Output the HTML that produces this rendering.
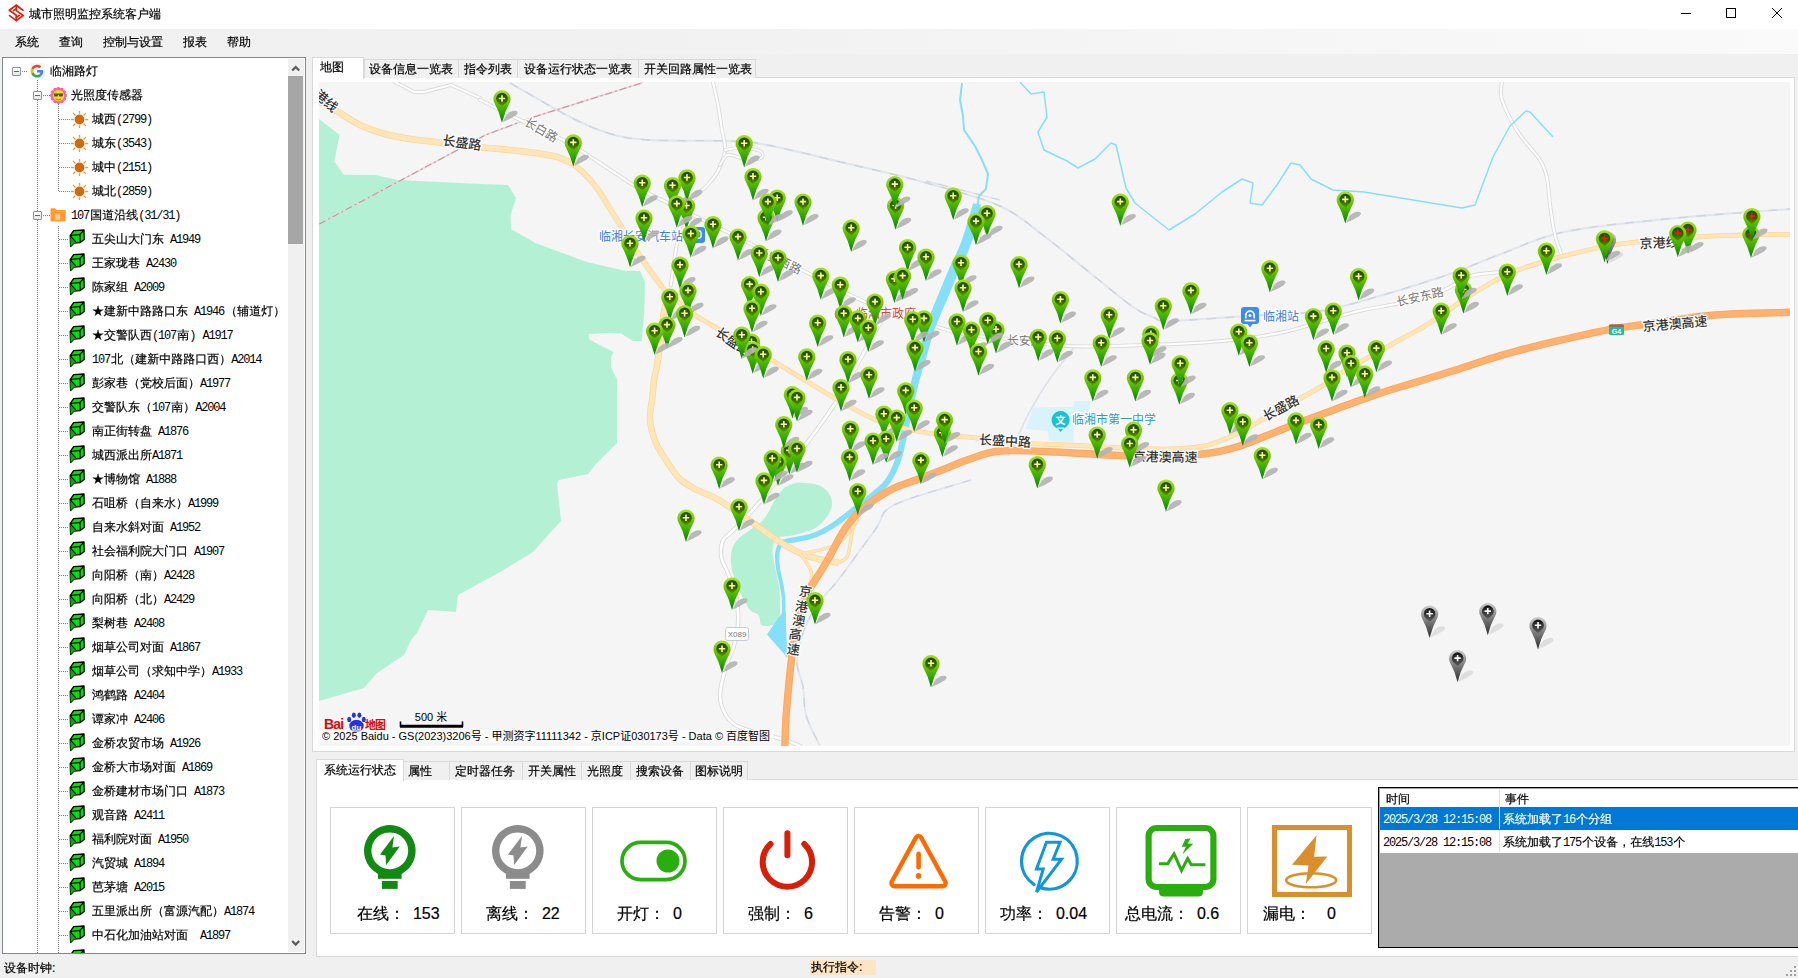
<!DOCTYPE html>
<html lang="zh-CN">
<head>
<meta charset="utf-8">
<title>城市照明监控系统客户端</title>
<style>
html,body{margin:0;padding:0;}
body{width:1798px;height:978px;overflow:hidden;background:#f0f0f0;position:relative;
 font-family:"Liberation Sans","WenQuanYi Zen Hei","Noto Sans CJK SC",sans-serif;font-size:12px;color:#000;line-height:1;-webkit-text-stroke-width:0.2px;}
.abs{position:absolute;}
.t12{position:absolute;font-size:12px;line-height:12px;white-space:pre;word-spacing:2.7px;}
.ctx{word-spacing:3.5px;}
.l{font-size:11px;letter-spacing:-0.1px;}
.m{font-family:"Liberation Mono",monospace;letter-spacing:-1.2px;margin-right:1.2px;word-spacing:0;-webkit-text-stroke-width:0;}
#titlebar{position:absolute;left:0;top:0;width:1798px;height:29px;background:#fff;}
#menubar{position:absolute;left:0;top:29px;width:1798px;height:25px;background:linear-gradient(to right,#f0f0f0 0%,#f1f1f1 35%,#fafafa 100%);}
#menubar span{position:absolute;top:7px;font-size:12px;line-height:12px;}
#tree{position:absolute;left:2px;top:57px;width:302px;height:895px;background:#fff;border:1px solid #828790;overflow:hidden;}
.row{position:absolute;left:0;height:24px;white-space:nowrap;font-size:12px;line-height:12px;}
.row .tx{position:absolute;top:6px;}
.vdot{position:absolute;width:1px;background-image:linear-gradient(to bottom,#808080 50%,transparent 50%);background-size:1px 2px;}
.hdot{position:absolute;height:1px;background-image:linear-gradient(to right,#808080 50%,transparent 50%);background-size:2px 1px;}
.box{position:absolute;width:7px;height:7px;border:1px solid #919191;background:linear-gradient(#fff,#e6e6e6);border-radius:1px;}
.box:after{content:"";position:absolute;left:1px;top:3px;width:5px;height:1px;background:#4b63a7;}
.tab{position:absolute;font-size:12px;line-height:12px;white-space:nowrap;background:#f0f0f0;border:1px solid #d9d9d9;border-bottom:none;box-sizing:border-box;}
.tab.sel{background:#fff;border-color:#d9d9d9;}
.tab span{position:absolute;left:5px;top:4px;}
.card{position:absolute;top:807px;width:123px;height:125px;border:1px solid #d4d4d4;background:#fff;}
.ctx{position:absolute;top:906px;font-size:16px;line-height:16px;white-space:pre;}
</style>
</head>
<body>
<div id="titlebar">
<svg class="abs" style="left:7px;top:3px" width="19" height="20" viewBox="0 0 19 20"><g fill="none" stroke="#e0200c" stroke-width="1.7" stroke-linejoin="round" stroke-linecap="round"><path d="M9.3 2.2 L2.3 7.3 L9.3 12.2 L9.3 17.6 L2.6 12.6"/><path d="M9.3 17.6 L16.2 12.5 L9.3 7.6 L9.3 2.2 L16 7.2"/><path d="M6.4 7.6 L9.3 5.6"/><path d="M12.2 12.4 L9.3 14.4"/></g></svg>
<div class="t12" style="left:29px;top:8px;">城市照明监控系统客户端</div>
<svg class="abs" style="left:1660px;top:0" width="138" height="29" viewBox="0 0 138 29"><g fill="none" stroke="#000" stroke-width="1"><path d="M21 13.5 H31"/><rect x="66.5" y="8.5" width="9" height="9"/><path d="M112 8 L122 18 M122 8 L112 18"/></g></svg>
</div>
<div id="menubar">
<span style="left:15px">系统</span>
<span style="left:59px">查询</span>
<span style="left:103px">控制与设置</span>
<span style="left:183px">报表</span>
<span style="left:227px">帮助</span>
</div>
<div id="tree">
<div class="vdot" style="left:34px;top:22px;height:880px"></div>
<div class="vdot" style="left:55px;top:46px;height:88px"></div>
<div class="vdot" style="left:55px;top:168px;height:734px"></div>
<div class="box" style="left:9px;top:9px"></div>
<div class="hdot" style="left:19px;top:13px;width:6px"></div>
<svg class="abs" style="left:26px;top:5px" width="16" height="16" viewBox="0 0 48 48"><rect x="0" y="0" width="48" height="48" rx="8" fill="#f6f6f6"/><path fill="#EA4335" d="M24 9.5c3.54 0 6.71 1.22 9.21 3.6l6.85-6.85C35.9 2.38 30.47 0 24 0 14.62 0 6.51 5.38 2.56 13.22l7.98 6.19C12.43 13.72 17.74 9.5 24 9.5z" transform="translate(5 5) scale(0.8)"/><path fill="#4285F4" d="M46.98 24.55c0-1.57-.15-3.09-.38-4.55H24v9.02h12.94c-.58 2.96-2.26 5.48-4.78 7.18l7.73 6c4.51-4.18 7.09-10.36 7.09-17.65z" transform="translate(5 5) scale(0.8)"/><path fill="#FBBC05" d="M10.53 28.59c-.48-1.45-.76-2.99-.76-4.59s.27-3.14.76-4.59l-7.98-6.19C.92 16.46 0 20.12 0 24c0 3.88.92 7.54 2.56 10.78l7.97-6.19z" transform="translate(5 5) scale(0.8)"/><path fill="#34A853" d="M24 48c6.48 0 11.93-2.13 15.89-5.81l-7.73-6c-2.15 1.45-4.92 2.3-8.16 2.3-6.26 0-11.57-4.22-13.47-9.91l-7.98 6.19C6.51 42.62 14.62 48 24 48z" transform="translate(5 5) scale(0.8)"/></svg>
<div class="t12" style="left:47px;top:7px">临湘路灯</div>
<div class="box" style="left:30px;top:33px"></div>
<div class="hdot" style="left:40px;top:37px;width:7px"></div>
<svg class="abs" style="left:47px;top:29px" width="17" height="17" viewBox="0 0 34 34"><g fill="#f9619b"><circle cx="30.0" cy="17.0" r="4"/><circle cx="28.3" cy="23.5" r="4"/><circle cx="23.5" cy="28.3" r="4"/><circle cx="17.0" cy="30.0" r="4"/><circle cx="10.5" cy="28.3" r="4"/><circle cx="5.7" cy="23.5" r="4"/><circle cx="4.0" cy="17.0" r="4"/><circle cx="5.7" cy="10.5" r="4"/><circle cx="10.5" cy="5.7" r="4"/><circle cx="17.0" cy="4.0" r="4"/><circle cx="23.5" cy="5.7" r="4"/><circle cx="28.3" cy="10.5" r="4"/></g><circle cx="17" cy="17" r="11.5" fill="#fbd433"/><path d="M7 13 H27 L25 19 H19 L17 15 L15 19 H9 Z" fill="#4a5a20"/><path d="M12 24 Q17 27 22 24" stroke="#a86a10" stroke-width="1.6" fill="none"/></svg>
<div class="t12" style="left:68px;top:31px">光照度传感器</div>
<div class="hdot" style="left:56px;top:61px;width:11px"></div>
<svg class="abs" style="left:68px;top:53px" width="17" height="17" viewBox="0 0 17 17"><g stroke="#f09a3c" stroke-width="1.3" stroke-linecap="round"><path d="M14.80 8.50 L17.10 8.50"/><path d="M12.95 12.95 L14.58 14.58"/><path d="M8.50 14.80 L8.50 17.10"/><path d="M4.05 12.95 L2.42 14.58"/><path d="M2.20 8.50 L-0.10 8.50"/><path d="M4.05 4.05 L2.42 2.42"/><path d="M8.50 2.20 L8.50 -0.10"/><path d="M12.95 4.05 L14.58 2.42"/></g><circle cx="8.5" cy="8.5" r="4.9" fill="#d2690a"/></svg>
<div class="t12" style="left:89px;top:55px">城西<span class="m">(2799)</span></div>
<div class="hdot" style="left:56px;top:85px;width:11px"></div>
<svg class="abs" style="left:68px;top:77px" width="17" height="17" viewBox="0 0 17 17"><g stroke="#f09a3c" stroke-width="1.3" stroke-linecap="round"><path d="M14.80 8.50 L17.10 8.50"/><path d="M12.95 12.95 L14.58 14.58"/><path d="M8.50 14.80 L8.50 17.10"/><path d="M4.05 12.95 L2.42 14.58"/><path d="M2.20 8.50 L-0.10 8.50"/><path d="M4.05 4.05 L2.42 2.42"/><path d="M8.50 2.20 L8.50 -0.10"/><path d="M12.95 4.05 L14.58 2.42"/></g><circle cx="8.5" cy="8.5" r="4.9" fill="#d2690a"/></svg>
<div class="t12" style="left:89px;top:79px">城东<span class="m">(3543)</span></div>
<div class="hdot" style="left:56px;top:109px;width:11px"></div>
<svg class="abs" style="left:68px;top:101px" width="17" height="17" viewBox="0 0 17 17"><g stroke="#f09a3c" stroke-width="1.3" stroke-linecap="round"><path d="M14.80 8.50 L17.10 8.50"/><path d="M12.95 12.95 L14.58 14.58"/><path d="M8.50 14.80 L8.50 17.10"/><path d="M4.05 12.95 L2.42 14.58"/><path d="M2.20 8.50 L-0.10 8.50"/><path d="M4.05 4.05 L2.42 2.42"/><path d="M8.50 2.20 L8.50 -0.10"/><path d="M12.95 4.05 L14.58 2.42"/></g><circle cx="8.5" cy="8.5" r="4.9" fill="#d2690a"/></svg>
<div class="t12" style="left:89px;top:103px">城中<span class="m">(2151)</span></div>
<div class="hdot" style="left:56px;top:133px;width:11px"></div>
<svg class="abs" style="left:68px;top:125px" width="17" height="17" viewBox="0 0 17 17"><g stroke="#f09a3c" stroke-width="1.3" stroke-linecap="round"><path d="M14.80 8.50 L17.10 8.50"/><path d="M12.95 12.95 L14.58 14.58"/><path d="M8.50 14.80 L8.50 17.10"/><path d="M4.05 12.95 L2.42 14.58"/><path d="M2.20 8.50 L-0.10 8.50"/><path d="M4.05 4.05 L2.42 2.42"/><path d="M8.50 2.20 L8.50 -0.10"/><path d="M12.95 4.05 L14.58 2.42"/></g><circle cx="8.5" cy="8.5" r="4.9" fill="#d2690a"/></svg>
<div class="t12" style="left:89px;top:127px">城北<span class="m">(2859)</span></div>
<div class="box" style="left:30px;top:153px"></div>
<div class="hdot" style="left:40px;top:157px;width:7px"></div>
<svg class="abs" style="left:47px;top:150px" width="16" height="14" viewBox="0 0 16 14"><path d="M0.5 1.2 Q0.5 0.3 1.4 0.3 H5 L6.6 2 H14.8 Q15.6 2 15.6 2.9 V12.6 Q15.6 13.4 14.8 13.4 H1.3 Q0.5 13.4 0.5 12.6 Z" fill="#ff9a2e"/><path d="M0.5 3.6 H15.6" stroke="#f5b041" stroke-width="0.9"/><rect x="5.2" y="6" width="5" height="6" rx="0.6" fill="#ffc98a"/></svg>
<div class="t12" style="left:68px;top:151px"><span class="m">107</span>国道沿线<span class="m">(31/31)</span></div>
<div class="hdot" style="left:56px;top:181px;width:10px"></div>
<svg class="abs" style="left:66px;top:171px" width="17" height="19" viewBox="0 0 17 19"><path d="M4.6 1.6 L15 1 L15.2 10.6 L11.2 13.6 L5 14 L1.6 17.6 L1.2 6.6 Z" fill="#00e400" stroke="#000" stroke-width="1.3" stroke-linejoin="round"/><path d="M1.4 6.8 L7.4 13.6 L5 14 L1.6 17.6 Z" fill="#00b400"/><path d="M1.2 6.6 L11 5.4 L15 1 M11 5.4 L11.2 13.6 M1.2 6.6 L7.4 13.6" fill="none" stroke="#000" stroke-width="1.3" stroke-linejoin="round"/></svg>
<div class="t12" style="left:89px;top:175px">五尖山大门东 <span class="m">A1949</span></div>
<div class="hdot" style="left:56px;top:205px;width:10px"></div>
<svg class="abs" style="left:66px;top:195px" width="17" height="19" viewBox="0 0 17 19"><path d="M4.6 1.6 L15 1 L15.2 10.6 L11.2 13.6 L5 14 L1.6 17.6 L1.2 6.6 Z" fill="#00e400" stroke="#000" stroke-width="1.3" stroke-linejoin="round"/><path d="M1.4 6.8 L7.4 13.6 L5 14 L1.6 17.6 Z" fill="#00b400"/><path d="M1.2 6.6 L11 5.4 L15 1 M11 5.4 L11.2 13.6 M1.2 6.6 L7.4 13.6" fill="none" stroke="#000" stroke-width="1.3" stroke-linejoin="round"/></svg>
<div class="t12" style="left:89px;top:199px">王家珑巷 <span class="m">A2430</span></div>
<div class="hdot" style="left:56px;top:229px;width:10px"></div>
<svg class="abs" style="left:66px;top:219px" width="17" height="19" viewBox="0 0 17 19"><path d="M4.6 1.6 L15 1 L15.2 10.6 L11.2 13.6 L5 14 L1.6 17.6 L1.2 6.6 Z" fill="#00e400" stroke="#000" stroke-width="1.3" stroke-linejoin="round"/><path d="M1.4 6.8 L7.4 13.6 L5 14 L1.6 17.6 Z" fill="#00b400"/><path d="M1.2 6.6 L11 5.4 L15 1 M11 5.4 L11.2 13.6 M1.2 6.6 L7.4 13.6" fill="none" stroke="#000" stroke-width="1.3" stroke-linejoin="round"/></svg>
<div class="t12" style="left:89px;top:223px">陈家组 <span class="m">A2009</span></div>
<div class="hdot" style="left:56px;top:253px;width:10px"></div>
<svg class="abs" style="left:66px;top:243px" width="17" height="19" viewBox="0 0 17 19"><path d="M4.6 1.6 L15 1 L15.2 10.6 L11.2 13.6 L5 14 L1.6 17.6 L1.2 6.6 Z" fill="#00e400" stroke="#000" stroke-width="1.3" stroke-linejoin="round"/><path d="M1.4 6.8 L7.4 13.6 L5 14 L1.6 17.6 Z" fill="#00b400"/><path d="M1.2 6.6 L11 5.4 L15 1 M11 5.4 L11.2 13.6 M1.2 6.6 L7.4 13.6" fill="none" stroke="#000" stroke-width="1.3" stroke-linejoin="round"/></svg>
<div class="t12" style="left:89px;top:247px">★建新中路路口东 <span class="m">A1946</span>（辅道灯）</div>
<div class="hdot" style="left:56px;top:277px;width:10px"></div>
<svg class="abs" style="left:66px;top:267px" width="17" height="19" viewBox="0 0 17 19"><path d="M4.6 1.6 L15 1 L15.2 10.6 L11.2 13.6 L5 14 L1.6 17.6 L1.2 6.6 Z" fill="#00e400" stroke="#000" stroke-width="1.3" stroke-linejoin="round"/><path d="M1.4 6.8 L7.4 13.6 L5 14 L1.6 17.6 Z" fill="#00b400"/><path d="M1.2 6.6 L11 5.4 L15 1 M11 5.4 L11.2 13.6 M1.2 6.6 L7.4 13.6" fill="none" stroke="#000" stroke-width="1.3" stroke-linejoin="round"/></svg>
<div class="t12" style="left:89px;top:271px">★交警队西<span class="m">(107</span>南<span class="m">)</span> <span class="m">A1917</span></div>
<div class="hdot" style="left:56px;top:301px;width:10px"></div>
<svg class="abs" style="left:66px;top:291px" width="17" height="19" viewBox="0 0 17 19"><path d="M4.6 1.6 L15 1 L15.2 10.6 L11.2 13.6 L5 14 L1.6 17.6 L1.2 6.6 Z" fill="#00e400" stroke="#000" stroke-width="1.3" stroke-linejoin="round"/><path d="M1.4 6.8 L7.4 13.6 L5 14 L1.6 17.6 Z" fill="#00b400"/><path d="M1.2 6.6 L11 5.4 L15 1 M11 5.4 L11.2 13.6 M1.2 6.6 L7.4 13.6" fill="none" stroke="#000" stroke-width="1.3" stroke-linejoin="round"/></svg>
<div class="t12" style="left:89px;top:295px"><span class="m">107</span>北（建新中路路口西）<span class="m">A2014</span></div>
<div class="hdot" style="left:56px;top:325px;width:10px"></div>
<svg class="abs" style="left:66px;top:315px" width="17" height="19" viewBox="0 0 17 19"><path d="M4.6 1.6 L15 1 L15.2 10.6 L11.2 13.6 L5 14 L1.6 17.6 L1.2 6.6 Z" fill="#00e400" stroke="#000" stroke-width="1.3" stroke-linejoin="round"/><path d="M1.4 6.8 L7.4 13.6 L5 14 L1.6 17.6 Z" fill="#00b400"/><path d="M1.2 6.6 L11 5.4 L15 1 M11 5.4 L11.2 13.6 M1.2 6.6 L7.4 13.6" fill="none" stroke="#000" stroke-width="1.3" stroke-linejoin="round"/></svg>
<div class="t12" style="left:89px;top:319px">彭家巷（党校后面）<span class="m">A1977</span></div>
<div class="hdot" style="left:56px;top:349px;width:10px"></div>
<svg class="abs" style="left:66px;top:339px" width="17" height="19" viewBox="0 0 17 19"><path d="M4.6 1.6 L15 1 L15.2 10.6 L11.2 13.6 L5 14 L1.6 17.6 L1.2 6.6 Z" fill="#00e400" stroke="#000" stroke-width="1.3" stroke-linejoin="round"/><path d="M1.4 6.8 L7.4 13.6 L5 14 L1.6 17.6 Z" fill="#00b400"/><path d="M1.2 6.6 L11 5.4 L15 1 M11 5.4 L11.2 13.6 M1.2 6.6 L7.4 13.6" fill="none" stroke="#000" stroke-width="1.3" stroke-linejoin="round"/></svg>
<div class="t12" style="left:89px;top:343px">交警队东（<span class="m">107</span>南）<span class="m">A2004</span></div>
<div class="hdot" style="left:56px;top:373px;width:10px"></div>
<svg class="abs" style="left:66px;top:363px" width="17" height="19" viewBox="0 0 17 19"><path d="M4.6 1.6 L15 1 L15.2 10.6 L11.2 13.6 L5 14 L1.6 17.6 L1.2 6.6 Z" fill="#00e400" stroke="#000" stroke-width="1.3" stroke-linejoin="round"/><path d="M1.4 6.8 L7.4 13.6 L5 14 L1.6 17.6 Z" fill="#00b400"/><path d="M1.2 6.6 L11 5.4 L15 1 M11 5.4 L11.2 13.6 M1.2 6.6 L7.4 13.6" fill="none" stroke="#000" stroke-width="1.3" stroke-linejoin="round"/></svg>
<div class="t12" style="left:89px;top:367px">南正街转盘 <span class="m">A1876</span></div>
<div class="hdot" style="left:56px;top:397px;width:10px"></div>
<svg class="abs" style="left:66px;top:387px" width="17" height="19" viewBox="0 0 17 19"><path d="M4.6 1.6 L15 1 L15.2 10.6 L11.2 13.6 L5 14 L1.6 17.6 L1.2 6.6 Z" fill="#00e400" stroke="#000" stroke-width="1.3" stroke-linejoin="round"/><path d="M1.4 6.8 L7.4 13.6 L5 14 L1.6 17.6 Z" fill="#00b400"/><path d="M1.2 6.6 L11 5.4 L15 1 M11 5.4 L11.2 13.6 M1.2 6.6 L7.4 13.6" fill="none" stroke="#000" stroke-width="1.3" stroke-linejoin="round"/></svg>
<div class="t12" style="left:89px;top:391px">城西派出所<span class="m">A1871</span></div>
<div class="hdot" style="left:56px;top:421px;width:10px"></div>
<svg class="abs" style="left:66px;top:411px" width="17" height="19" viewBox="0 0 17 19"><path d="M4.6 1.6 L15 1 L15.2 10.6 L11.2 13.6 L5 14 L1.6 17.6 L1.2 6.6 Z" fill="#00e400" stroke="#000" stroke-width="1.3" stroke-linejoin="round"/><path d="M1.4 6.8 L7.4 13.6 L5 14 L1.6 17.6 Z" fill="#00b400"/><path d="M1.2 6.6 L11 5.4 L15 1 M11 5.4 L11.2 13.6 M1.2 6.6 L7.4 13.6" fill="none" stroke="#000" stroke-width="1.3" stroke-linejoin="round"/></svg>
<div class="t12" style="left:89px;top:415px">★博物馆 <span class="m">A1888</span></div>
<div class="hdot" style="left:56px;top:445px;width:10px"></div>
<svg class="abs" style="left:66px;top:435px" width="17" height="19" viewBox="0 0 17 19"><path d="M4.6 1.6 L15 1 L15.2 10.6 L11.2 13.6 L5 14 L1.6 17.6 L1.2 6.6 Z" fill="#00e400" stroke="#000" stroke-width="1.3" stroke-linejoin="round"/><path d="M1.4 6.8 L7.4 13.6 L5 14 L1.6 17.6 Z" fill="#00b400"/><path d="M1.2 6.6 L11 5.4 L15 1 M11 5.4 L11.2 13.6 M1.2 6.6 L7.4 13.6" fill="none" stroke="#000" stroke-width="1.3" stroke-linejoin="round"/></svg>
<div class="t12" style="left:89px;top:439px">石咀桥（自来水）<span class="m">A1999</span></div>
<div class="hdot" style="left:56px;top:469px;width:10px"></div>
<svg class="abs" style="left:66px;top:459px" width="17" height="19" viewBox="0 0 17 19"><path d="M4.6 1.6 L15 1 L15.2 10.6 L11.2 13.6 L5 14 L1.6 17.6 L1.2 6.6 Z" fill="#00e400" stroke="#000" stroke-width="1.3" stroke-linejoin="round"/><path d="M1.4 6.8 L7.4 13.6 L5 14 L1.6 17.6 Z" fill="#00b400"/><path d="M1.2 6.6 L11 5.4 L15 1 M11 5.4 L11.2 13.6 M1.2 6.6 L7.4 13.6" fill="none" stroke="#000" stroke-width="1.3" stroke-linejoin="round"/></svg>
<div class="t12" style="left:89px;top:463px">自来水斜对面 <span class="m">A1952</span></div>
<div class="hdot" style="left:56px;top:493px;width:10px"></div>
<svg class="abs" style="left:66px;top:483px" width="17" height="19" viewBox="0 0 17 19"><path d="M4.6 1.6 L15 1 L15.2 10.6 L11.2 13.6 L5 14 L1.6 17.6 L1.2 6.6 Z" fill="#00e400" stroke="#000" stroke-width="1.3" stroke-linejoin="round"/><path d="M1.4 6.8 L7.4 13.6 L5 14 L1.6 17.6 Z" fill="#00b400"/><path d="M1.2 6.6 L11 5.4 L15 1 M11 5.4 L11.2 13.6 M1.2 6.6 L7.4 13.6" fill="none" stroke="#000" stroke-width="1.3" stroke-linejoin="round"/></svg>
<div class="t12" style="left:89px;top:487px">社会福利院大门口 <span class="m">A1907</span></div>
<div class="hdot" style="left:56px;top:517px;width:10px"></div>
<svg class="abs" style="left:66px;top:507px" width="17" height="19" viewBox="0 0 17 19"><path d="M4.6 1.6 L15 1 L15.2 10.6 L11.2 13.6 L5 14 L1.6 17.6 L1.2 6.6 Z" fill="#00e400" stroke="#000" stroke-width="1.3" stroke-linejoin="round"/><path d="M1.4 6.8 L7.4 13.6 L5 14 L1.6 17.6 Z" fill="#00b400"/><path d="M1.2 6.6 L11 5.4 L15 1 M11 5.4 L11.2 13.6 M1.2 6.6 L7.4 13.6" fill="none" stroke="#000" stroke-width="1.3" stroke-linejoin="round"/></svg>
<div class="t12" style="left:89px;top:511px">向阳桥（南）<span class="m">A2428</span></div>
<div class="hdot" style="left:56px;top:541px;width:10px"></div>
<svg class="abs" style="left:66px;top:531px" width="17" height="19" viewBox="0 0 17 19"><path d="M4.6 1.6 L15 1 L15.2 10.6 L11.2 13.6 L5 14 L1.6 17.6 L1.2 6.6 Z" fill="#00e400" stroke="#000" stroke-width="1.3" stroke-linejoin="round"/><path d="M1.4 6.8 L7.4 13.6 L5 14 L1.6 17.6 Z" fill="#00b400"/><path d="M1.2 6.6 L11 5.4 L15 1 M11 5.4 L11.2 13.6 M1.2 6.6 L7.4 13.6" fill="none" stroke="#000" stroke-width="1.3" stroke-linejoin="round"/></svg>
<div class="t12" style="left:89px;top:535px">向阳桥（北）<span class="m">A2429</span></div>
<div class="hdot" style="left:56px;top:565px;width:10px"></div>
<svg class="abs" style="left:66px;top:555px" width="17" height="19" viewBox="0 0 17 19"><path d="M4.6 1.6 L15 1 L15.2 10.6 L11.2 13.6 L5 14 L1.6 17.6 L1.2 6.6 Z" fill="#00e400" stroke="#000" stroke-width="1.3" stroke-linejoin="round"/><path d="M1.4 6.8 L7.4 13.6 L5 14 L1.6 17.6 Z" fill="#00b400"/><path d="M1.2 6.6 L11 5.4 L15 1 M11 5.4 L11.2 13.6 M1.2 6.6 L7.4 13.6" fill="none" stroke="#000" stroke-width="1.3" stroke-linejoin="round"/></svg>
<div class="t12" style="left:89px;top:559px">梨树巷 <span class="m">A2408</span></div>
<div class="hdot" style="left:56px;top:589px;width:10px"></div>
<svg class="abs" style="left:66px;top:579px" width="17" height="19" viewBox="0 0 17 19"><path d="M4.6 1.6 L15 1 L15.2 10.6 L11.2 13.6 L5 14 L1.6 17.6 L1.2 6.6 Z" fill="#00e400" stroke="#000" stroke-width="1.3" stroke-linejoin="round"/><path d="M1.4 6.8 L7.4 13.6 L5 14 L1.6 17.6 Z" fill="#00b400"/><path d="M1.2 6.6 L11 5.4 L15 1 M11 5.4 L11.2 13.6 M1.2 6.6 L7.4 13.6" fill="none" stroke="#000" stroke-width="1.3" stroke-linejoin="round"/></svg>
<div class="t12" style="left:89px;top:583px">烟草公司对面 <span class="m">A1867</span></div>
<div class="hdot" style="left:56px;top:613px;width:10px"></div>
<svg class="abs" style="left:66px;top:603px" width="17" height="19" viewBox="0 0 17 19"><path d="M4.6 1.6 L15 1 L15.2 10.6 L11.2 13.6 L5 14 L1.6 17.6 L1.2 6.6 Z" fill="#00e400" stroke="#000" stroke-width="1.3" stroke-linejoin="round"/><path d="M1.4 6.8 L7.4 13.6 L5 14 L1.6 17.6 Z" fill="#00b400"/><path d="M1.2 6.6 L11 5.4 L15 1 M11 5.4 L11.2 13.6 M1.2 6.6 L7.4 13.6" fill="none" stroke="#000" stroke-width="1.3" stroke-linejoin="round"/></svg>
<div class="t12" style="left:89px;top:607px">烟草公司（求知中学）<span class="m">A1933</span></div>
<div class="hdot" style="left:56px;top:637px;width:10px"></div>
<svg class="abs" style="left:66px;top:627px" width="17" height="19" viewBox="0 0 17 19"><path d="M4.6 1.6 L15 1 L15.2 10.6 L11.2 13.6 L5 14 L1.6 17.6 L1.2 6.6 Z" fill="#00e400" stroke="#000" stroke-width="1.3" stroke-linejoin="round"/><path d="M1.4 6.8 L7.4 13.6 L5 14 L1.6 17.6 Z" fill="#00b400"/><path d="M1.2 6.6 L11 5.4 L15 1 M11 5.4 L11.2 13.6 M1.2 6.6 L7.4 13.6" fill="none" stroke="#000" stroke-width="1.3" stroke-linejoin="round"/></svg>
<div class="t12" style="left:89px;top:631px">鸿鹤路 <span class="m">A2404</span></div>
<div class="hdot" style="left:56px;top:661px;width:10px"></div>
<svg class="abs" style="left:66px;top:651px" width="17" height="19" viewBox="0 0 17 19"><path d="M4.6 1.6 L15 1 L15.2 10.6 L11.2 13.6 L5 14 L1.6 17.6 L1.2 6.6 Z" fill="#00e400" stroke="#000" stroke-width="1.3" stroke-linejoin="round"/><path d="M1.4 6.8 L7.4 13.6 L5 14 L1.6 17.6 Z" fill="#00b400"/><path d="M1.2 6.6 L11 5.4 L15 1 M11 5.4 L11.2 13.6 M1.2 6.6 L7.4 13.6" fill="none" stroke="#000" stroke-width="1.3" stroke-linejoin="round"/></svg>
<div class="t12" style="left:89px;top:655px">谭家冲 <span class="m">A2406</span></div>
<div class="hdot" style="left:56px;top:685px;width:10px"></div>
<svg class="abs" style="left:66px;top:675px" width="17" height="19" viewBox="0 0 17 19"><path d="M4.6 1.6 L15 1 L15.2 10.6 L11.2 13.6 L5 14 L1.6 17.6 L1.2 6.6 Z" fill="#00e400" stroke="#000" stroke-width="1.3" stroke-linejoin="round"/><path d="M1.4 6.8 L7.4 13.6 L5 14 L1.6 17.6 Z" fill="#00b400"/><path d="M1.2 6.6 L11 5.4 L15 1 M11 5.4 L11.2 13.6 M1.2 6.6 L7.4 13.6" fill="none" stroke="#000" stroke-width="1.3" stroke-linejoin="round"/></svg>
<div class="t12" style="left:89px;top:679px">金桥农贸市场 <span class="m">A1926</span></div>
<div class="hdot" style="left:56px;top:709px;width:10px"></div>
<svg class="abs" style="left:66px;top:699px" width="17" height="19" viewBox="0 0 17 19"><path d="M4.6 1.6 L15 1 L15.2 10.6 L11.2 13.6 L5 14 L1.6 17.6 L1.2 6.6 Z" fill="#00e400" stroke="#000" stroke-width="1.3" stroke-linejoin="round"/><path d="M1.4 6.8 L7.4 13.6 L5 14 L1.6 17.6 Z" fill="#00b400"/><path d="M1.2 6.6 L11 5.4 L15 1 M11 5.4 L11.2 13.6 M1.2 6.6 L7.4 13.6" fill="none" stroke="#000" stroke-width="1.3" stroke-linejoin="round"/></svg>
<div class="t12" style="left:89px;top:703px">金桥大市场对面 <span class="m">A1869</span></div>
<div class="hdot" style="left:56px;top:733px;width:10px"></div>
<svg class="abs" style="left:66px;top:723px" width="17" height="19" viewBox="0 0 17 19"><path d="M4.6 1.6 L15 1 L15.2 10.6 L11.2 13.6 L5 14 L1.6 17.6 L1.2 6.6 Z" fill="#00e400" stroke="#000" stroke-width="1.3" stroke-linejoin="round"/><path d="M1.4 6.8 L7.4 13.6 L5 14 L1.6 17.6 Z" fill="#00b400"/><path d="M1.2 6.6 L11 5.4 L15 1 M11 5.4 L11.2 13.6 M1.2 6.6 L7.4 13.6" fill="none" stroke="#000" stroke-width="1.3" stroke-linejoin="round"/></svg>
<div class="t12" style="left:89px;top:727px">金桥建材市场门口 <span class="m">A1873</span></div>
<div class="hdot" style="left:56px;top:757px;width:10px"></div>
<svg class="abs" style="left:66px;top:747px" width="17" height="19" viewBox="0 0 17 19"><path d="M4.6 1.6 L15 1 L15.2 10.6 L11.2 13.6 L5 14 L1.6 17.6 L1.2 6.6 Z" fill="#00e400" stroke="#000" stroke-width="1.3" stroke-linejoin="round"/><path d="M1.4 6.8 L7.4 13.6 L5 14 L1.6 17.6 Z" fill="#00b400"/><path d="M1.2 6.6 L11 5.4 L15 1 M11 5.4 L11.2 13.6 M1.2 6.6 L7.4 13.6" fill="none" stroke="#000" stroke-width="1.3" stroke-linejoin="round"/></svg>
<div class="t12" style="left:89px;top:751px">观音路 <span class="m">A2411</span></div>
<div class="hdot" style="left:56px;top:781px;width:10px"></div>
<svg class="abs" style="left:66px;top:771px" width="17" height="19" viewBox="0 0 17 19"><path d="M4.6 1.6 L15 1 L15.2 10.6 L11.2 13.6 L5 14 L1.6 17.6 L1.2 6.6 Z" fill="#00e400" stroke="#000" stroke-width="1.3" stroke-linejoin="round"/><path d="M1.4 6.8 L7.4 13.6 L5 14 L1.6 17.6 Z" fill="#00b400"/><path d="M1.2 6.6 L11 5.4 L15 1 M11 5.4 L11.2 13.6 M1.2 6.6 L7.4 13.6" fill="none" stroke="#000" stroke-width="1.3" stroke-linejoin="round"/></svg>
<div class="t12" style="left:89px;top:775px">福利院对面 <span class="m">A1950</span></div>
<div class="hdot" style="left:56px;top:805px;width:10px"></div>
<svg class="abs" style="left:66px;top:795px" width="17" height="19" viewBox="0 0 17 19"><path d="M4.6 1.6 L15 1 L15.2 10.6 L11.2 13.6 L5 14 L1.6 17.6 L1.2 6.6 Z" fill="#00e400" stroke="#000" stroke-width="1.3" stroke-linejoin="round"/><path d="M1.4 6.8 L7.4 13.6 L5 14 L1.6 17.6 Z" fill="#00b400"/><path d="M1.2 6.6 L11 5.4 L15 1 M11 5.4 L11.2 13.6 M1.2 6.6 L7.4 13.6" fill="none" stroke="#000" stroke-width="1.3" stroke-linejoin="round"/></svg>
<div class="t12" style="left:89px;top:799px">汽贸城 <span class="m">A1894</span></div>
<div class="hdot" style="left:56px;top:829px;width:10px"></div>
<svg class="abs" style="left:66px;top:819px" width="17" height="19" viewBox="0 0 17 19"><path d="M4.6 1.6 L15 1 L15.2 10.6 L11.2 13.6 L5 14 L1.6 17.6 L1.2 6.6 Z" fill="#00e400" stroke="#000" stroke-width="1.3" stroke-linejoin="round"/><path d="M1.4 6.8 L7.4 13.6 L5 14 L1.6 17.6 Z" fill="#00b400"/><path d="M1.2 6.6 L11 5.4 L15 1 M11 5.4 L11.2 13.6 M1.2 6.6 L7.4 13.6" fill="none" stroke="#000" stroke-width="1.3" stroke-linejoin="round"/></svg>
<div class="t12" style="left:89px;top:823px">芭茅塘 <span class="m">A2015</span></div>
<div class="hdot" style="left:56px;top:853px;width:10px"></div>
<svg class="abs" style="left:66px;top:843px" width="17" height="19" viewBox="0 0 17 19"><path d="M4.6 1.6 L15 1 L15.2 10.6 L11.2 13.6 L5 14 L1.6 17.6 L1.2 6.6 Z" fill="#00e400" stroke="#000" stroke-width="1.3" stroke-linejoin="round"/><path d="M1.4 6.8 L7.4 13.6 L5 14 L1.6 17.6 Z" fill="#00b400"/><path d="M1.2 6.6 L11 5.4 L15 1 M11 5.4 L11.2 13.6 M1.2 6.6 L7.4 13.6" fill="none" stroke="#000" stroke-width="1.3" stroke-linejoin="round"/></svg>
<div class="t12" style="left:89px;top:847px">五里派出所（富源汽配）<span class="m">A1874</span></div>
<div class="hdot" style="left:56px;top:877px;width:10px"></div>
<svg class="abs" style="left:66px;top:867px" width="17" height="19" viewBox="0 0 17 19"><path d="M4.6 1.6 L15 1 L15.2 10.6 L11.2 13.6 L5 14 L1.6 17.6 L1.2 6.6 Z" fill="#00e400" stroke="#000" stroke-width="1.3" stroke-linejoin="round"/><path d="M1.4 6.8 L7.4 13.6 L5 14 L1.6 17.6 Z" fill="#00b400"/><path d="M1.2 6.6 L11 5.4 L15 1 M11 5.4 L11.2 13.6 M1.2 6.6 L7.4 13.6" fill="none" stroke="#000" stroke-width="1.3" stroke-linejoin="round"/></svg>
<div class="t12" style="left:89px;top:871px">中石化加油站对面  <span class="m">A1897</span></div>
<div class="hdot" style="left:56px;top:901px;width:10px"></div>
<svg class="abs" style="left:66px;top:891px" width="17" height="19" viewBox="0 0 17 19"><path d="M4.6 1.6 L15 1 L15.2 10.6 L11.2 13.6 L5 14 L1.6 17.6 L1.2 6.6 Z" fill="#00e400" stroke="#000" stroke-width="1.3" stroke-linejoin="round"/><path d="M1.4 6.8 L7.4 13.6 L5 14 L1.6 17.6 Z" fill="#00b400"/><path d="M1.2 6.6 L11 5.4 L15 1 M11 5.4 L11.2 13.6 M1.2 6.6 L7.4 13.6" fill="none" stroke="#000" stroke-width="1.3" stroke-linejoin="round"/></svg>
<div class="t12" style="left:89px;top:895px">白云中学 <span class="m">A1868</span></div>
<div class="abs" style="left:285px;top:1px;width:16px;height:893px;background:#f0f0f0"></div>
<div class="abs" style="left:285px;top:18px;width:15px;height:168px;background:#a6a6a6"></div>
<svg class="abs" style="left:285px;top:1px" width="16" height="17"><path d="M4.200 11.600 L7.700 8 L11.200 11.600" fill="none" stroke="#5a5a5a" stroke-width="2.200"/></svg>
<svg class="abs" style="left:285px;top:877px" width="16" height="17"><path d="M4.200 6 L7.700 9.600 L11.200 6" fill="none" stroke="#5a5a5a" stroke-width="2.200"/></svg>
</div>
<div class="abs" style="left:312px;top:77px;width:1483px;height:675px;background:#fff;border:1px solid #d9d9d9;box-sizing:border-box"></div>
<div class="tab" style="left:364px;top:59px;width:95px;height:19px"><span style="left:4px;top:3px">设备信息一览表</span></div>
<div class="tab" style="left:458px;top:59px;width:60px;height:19px"><span style="left:5px;top:3px">指令列表</span></div>
<div class="tab" style="left:517px;top:59px;width:122px;height:19px"><span style="left:6px;top:3px">设备运行状态一览表</span></div>
<div class="tab" style="left:638px;top:59px;width:118px;height:19px"><span style="left:5px;top:3px">开关回路属性一览表</span></div>
<div class="tab sel" style="left:312px;top:57px;width:52px;height:22px"><span style="left:7px;top:3px">地图</span></div>
<div class="abs" style="left:316px;top:779px;width:1484px;height:178px;background:#fff;border:1px solid #d9d9d9;box-sizing:border-box"></div>
<div class="tab" style="left:403px;top:761px;width:47px;height:19px"><span style="left:4px;top:3px">属性</span></div>
<div class="tab" style="left:449px;top:761px;width:74px;height:19px"><span style="left:5px;top:3px">定时器任务</span></div>
<div class="tab" style="left:522px;top:761px;width:60px;height:19px"><span style="left:5px;top:3px">开关属性</span></div>
<div class="tab" style="left:581px;top:761px;width:50px;height:19px"><span style="left:5px;top:3px">光照度</span></div>
<div class="tab" style="left:630px;top:761px;width:61px;height:19px"><span style="left:5px;top:3px">搜索设备</span></div>
<div class="tab" style="left:690px;top:761px;width:58px;height:19px"><span style="left:4px;top:3px">图标说明</span></div>
<div class="tab sel" style="left:316px;top:759px;width:88px;height:22px"><span style="left:7px;top:4px">系统运行状态</span></div>
<svg class="abs" style="left:319px;top:82px" width="1471" height="664" viewBox="319 82 1471 664">
<defs>
<linearGradient id="pg" x1="0" y1="0" x2="0" y2="1"><stop offset="0" stop-color="#a8e220"/><stop offset="0.3" stop-color="#74c800"/><stop offset="0.65" stop-color="#36aa00"/><stop offset="1" stop-color="#008200"/></linearGradient>
<linearGradient id="pi" x1="0" y1="0" x2="0" y2="1"><stop offset="0" stop-color="#1f4a00"/><stop offset="0.6" stop-color="#336600"/><stop offset="1" stop-color="#5c9a00"/></linearGradient>
<linearGradient id="pgg" x1="0" y1="0" x2="0" y2="1"><stop offset="0" stop-color="#d0d0d0"/><stop offset="0.35" stop-color="#8e8e8e"/><stop offset="1" stop-color="#2e2e2e"/></linearGradient>
<linearGradient id="pig" x1="0" y1="0" x2="0" y2="1"><stop offset="0" stop-color="#141414"/><stop offset="1" stop-color="#5a5a5a"/></linearGradient>
<filter id="bl" x="-20%" y="-20%" width="140%" height="140%"><feGaussianBlur stdDeviation="0.6"/></filter>
<g id="p"><path d="M0.6 -0.6 L4.5 -8 Q9.5 -12.8 14.6 -11.6 Q17.2 -9.8 13.4 -7 Q7 -3 0.6 -0.6 Z" fill="#b2b2b2" fill-opacity="0.9" filter="url(#bl)"/><path d="M0 0 Q-2.7 -11 -8.02 -20.69 A8.6 8.6 0 1 1 8.02 -20.69 Q2.7 -11 0 0 Z" fill="url(#pg)"/><path d="M0 -16.4 L-4.6 -20.6 A5.8 5.8 0 1 1 4.6 -20.6 Z" fill="url(#pi)"/><path d="M-3.2 -24.2 H3.2 M0 -27.4 V-21" stroke="#fff7a6" stroke-width="1.6"/></g>
<g id="pr"><path d="M0.6 -0.6 L4.5 -8 Q9.5 -12.8 14.6 -11.6 Q17.2 -9.8 13.4 -7 Q7 -3 0.6 -0.6 Z" fill="#b2b2b2" fill-opacity="0.9" filter="url(#bl)"/><path d="M0 0 Q-2.7 -11 -8.02 -20.69 A8.6 8.6 0 1 1 8.02 -20.69 Q2.7 -11 0 0 Z" fill="url(#pg)"/><path d="M0 -16.4 L-4.6 -20.6 A5.8 5.8 0 1 1 4.6 -20.6 Z" fill="url(#pi)"/><path d="M-3.2 -24.2 H3.2 M0 -27.4 V-21" stroke="#ff1414" stroke-width="1.6"/></g>
<g id="pk"><path d="M0.6 -0.6 L4.5 -8 Q9.5 -12.8 14.6 -11.6 Q17.2 -9.8 13.4 -7 Q7 -3 0.6 -0.6 Z" fill="#dcdcdc" fill-opacity="0.9" filter="url(#bl)"/><path d="M0 0 Q-2.7 -11 -8.02 -20.69 A8.6 8.6 0 1 1 8.02 -20.69 Q2.7 -11 0 0 Z" fill="url(#pgg)"/><path d="M0 -16.4 L-4.6 -20.6 A5.8 5.8 0 1 1 4.6 -20.6 Z" fill="url(#pig)"/><path d="M-3.2 -24.2 H3.2 M0 -27.4 V-21" stroke="#ffffff" stroke-width="1.6"/></g>
</defs>
<rect x="319" y="82" width="1471" height="664" fill="#f5f5f5"/>
<path d="M319 119 L339.6 135 L334.3 161.5 L343.8 174.7 L375 175 L398 180 L480 184 L508 185 L516 198 L510.5 215 L511 229 L535.5 243 L585.7 261.7 L623.4 270.4 L640 271 L644.9 282 L644.3 311.5 L641.8 341 L633.3 341 L621 333.6 L606.3 333 L588.5 334.2 L589.7 339.8 L613.6 352 L611.2 357 L611.2 368 L617.3 380 L617 389 L617 443 L596 464 L588 474 L559 480 L557 484 L561 521 L549 534 L533 552 L502 571 L458 595 L456 612 L428 610 L417 633 L411 640 L404 655 L377 673 L364 688 L319 701 Z" fill="#b3f0d4"/>
<path d="M783.6 488.3 C785.9 487.4 791.4 483.3 797.4 482.8 C803.4 482.3 814.0 483.2 819.5 485.5 C825.0 487.8 828.7 492.5 830.5 496.6 C832.3 500.8 832.8 505.3 830.5 510.4 C828.2 515.5 822.7 522.9 816.7 527 C810.7 531.1 801.1 533.2 794.6 535 C788.1 536.8 781.7 535.7 778 538 C774.3 540.3 773.0 544.0 772.5 549 C772.0 554.0 774.1 561.4 775.3 568.3 C776.4 575.2 778.7 582.1 779.4 590.4 C780.1 598.7 780.5 612.2 779.4 618 C778.2 623.8 775.5 623.8 772.5 625 C769.5 626.2 763.8 626.6 761.5 625 C759.2 623.4 761.0 618.3 758.7 615.3 C756.4 612.3 751.8 613.5 747.7 607 C743.6 600.5 736.7 585.4 733.9 576.6 C731.1 567.9 730.5 560.5 731 554.5 C731.5 548.5 733.4 544.8 736.6 540.7 C739.8 536.6 745.8 533.4 750.4 529.7 C755.0 526.0 760.1 523.8 764.2 518.7 C768.4 513.6 772.1 504.4 775.3 499.3 C778.5 494.2 782.2 490.1 783.6 488.3 Z" fill="#b3f0d4"/>
<path d="M1033.4 407.8 L1073.4 406.7 L1074.5 401 L1091 401 L1089 411 L1090 419 L1073.4 427.8 L1073.4 442 L1049 441 L1047.8 431 L1025.6 429 Z" fill="#d9f3fb"/>
<path d="M510 83 C520.3 88.8 555.2 109.5 572 118 C588.8 126.5 598.0 130.3 611 134 C624.0 137.7 630.5 138.8 650 140 C669.5 141.2 708.5 140.2 728 141 C747.5 141.8 747.5 141.3 767 145 C786.5 148.7 819.0 156.8 845 163 C871.0 169.2 897.2 174.8 923 182 C948.8 189.2 979.8 197.0 1000 206 C1020.2 215.0 1029.2 225.0 1044 236 C1058.8 247.0 1074.2 260.2 1089 272 C1103.8 283.8 1122.3 299.5 1133 307 C1143.7 314.5 1147.0 314.7 1153 317 C1159.0 319.3 1153.2 321.2 1169 321 C1184.8 320.8 1224.3 317.5 1248 316 C1271.7 314.5 1293.2 314.2 1311 312 C1328.8 309.8 1332.8 309.0 1355 303 C1377.2 297.0 1419.7 284.2 1444 276 C1468.3 267.8 1481.0 261.3 1501 254 C1521.0 246.7 1536.5 237.8 1564 232 C1591.5 226.2 1628.3 222.8 1666 219 C1703.7 215.2 1769.3 210.7 1790 209" fill="none" stroke="#e1e5ec" stroke-width="2.0"/>
<path d="M510 83 C520.3 88.8 555.2 109.5 572 118 C588.8 126.5 598.0 130.3 611 134 C624.0 137.7 630.5 138.8 650 140 C669.5 141.2 708.5 140.2 728 141 C747.5 141.8 747.5 141.3 767 145 C786.5 148.7 819.0 156.8 845 163 C871.0 169.2 897.2 174.8 923 182 C948.8 189.2 979.8 197.0 1000 206 C1020.2 215.0 1029.2 225.0 1044 236 C1058.8 247.0 1074.2 260.2 1089 272 C1103.8 283.8 1122.3 299.5 1133 307 C1143.7 314.5 1147.0 314.7 1153 317 C1159.0 319.3 1153.2 321.2 1169 321 C1184.8 320.8 1224.3 317.5 1248 316 C1271.7 314.5 1293.2 314.2 1311 312 C1328.8 309.8 1332.8 309.0 1355 303 C1377.2 297.0 1419.7 284.2 1444 276 C1468.3 267.8 1481.0 261.3 1501 254 C1521.0 246.7 1536.5 237.8 1564 232 C1591.5 226.2 1628.3 222.8 1666 219 C1703.7 215.2 1769.3 210.7 1790 209" fill="none" stroke="#cdd4e0" stroke-width="1.40" stroke-dasharray="9 9"/>
<path d="M1000 200 C987.7 196.8 938.3 184.2 926 181" fill="none" stroke="#e1e5ec" stroke-width="1.6"/>
<path d="M1000 200 C987.7 196.8 938.3 184.2 926 181" fill="none" stroke="#cdd4e0" stroke-width="1.12" stroke-dasharray="9 9"/>
<path d="M971 480 C958.2 484.2 910.0 496.7 894 505 C878.0 513.3 884.2 517.7 875 530 C865.8 542.3 847.8 567.5 839 579 C830.2 590.5 827.5 591.3 822 599 C816.5 606.7 810.2 614.8 806 625 C801.8 635.2 797.5 649.7 797 660 C796.5 670.3 801.5 677.8 803 687 C804.5 696.2 803.7 706.2 806 715 C808.3 723.8 814.7 734.8 817 740 C819.3 745.2 819.5 745.0 820 746" fill="none" stroke="#e1e5ec" stroke-width="1.8"/>
<path d="M971 480 C958.2 484.2 910.0 496.7 894 505 C878.0 513.3 884.2 517.7 875 530 C865.8 542.3 847.8 567.5 839 579 C830.2 590.5 827.5 591.3 822 599 C816.5 606.7 810.2 614.8 806 625 C801.8 635.2 797.5 649.7 797 660 C796.5 670.3 801.5 677.8 803 687 C804.5 696.2 803.7 706.2 806 715 C808.3 723.8 814.7 734.8 817 740 C819.3 745.2 819.5 745.0 820 746" fill="none" stroke="#cdd4e0" stroke-width="1.26" stroke-dasharray="9 9"/>
<path d="M1074 347.6 C1069.8 353.0 1056.5 369.1 1049 380 C1041.5 390.9 1035.0 401.8 1029 413 C1023.0 424.2 1016.5 439.8 1013 447 C1009.5 454.2 1008.8 454.5 1008 456" fill="none" stroke="#dde1e8" stroke-width="1.6"/>
<path d="M319.3 224 L485.4 135 L535.6 116.4 L643.3 82.5" fill="none" stroke="#ead6d9" stroke-width="1.8"/><path d="M319.3 224 L485.4 135 L535.6 116.4 L643.3 82.5" fill="none" stroke="#c9959d" stroke-width="1.1" stroke-dasharray="7 3 2 3"/>
<path d="M395 82 L414 92 L424 92 L451 85 L480 98" fill="none" stroke="#dadada" stroke-width="4.0" stroke-linejoin="round" stroke-linecap="round"/>
<path d="M395 82 L414 92 L424 92 L451 85 L480 98" fill="none" stroke="#ffffff" stroke-width="2.2" stroke-linejoin="round" stroke-linecap="round"/>
<path d="M480 99.8 C486.2 102.9 503.2 111.9 517 118.6 C530.8 125.3 549.2 132.6 563 140 C576.8 147.4 587.2 154.8 600 163 C612.8 171.2 625.2 180.7 640 189 C654.8 197.3 669.2 203.2 689 213 C708.8 222.8 739.5 238.2 759 248 C778.5 257.8 788.3 263.0 806 272 C823.7 281.0 845.5 293.7 865 302 C884.5 310.3 906.8 316.7 923 322 C939.2 327.3 949.2 331.3 962 334 C974.8 336.7 982.5 336.0 1000 338 C1017.5 340.0 1042.7 344.8 1067 346 C1091.3 347.2 1120.2 345.8 1146 345 C1171.8 344.2 1199.0 343.2 1222 341 C1245.0 338.8 1261.8 336.8 1284 332 C1306.2 327.2 1335.7 316.8 1355 312 C1374.3 307.2 1385.2 306.7 1400 303 C1414.8 299.3 1432.3 294.5 1444 290 C1455.7 285.5 1460.3 279.0 1470 276 C1479.7 273.0 1496.7 272.7 1502 272" fill="none" stroke="#dadada" stroke-width="4.0" stroke-linejoin="round" stroke-linecap="round"/>
<path d="M480 99.8 C486.2 102.9 503.2 111.9 517 118.6 C530.8 125.3 549.2 132.6 563 140 C576.8 147.4 587.2 154.8 600 163 C612.8 171.2 625.2 180.7 640 189 C654.8 197.3 669.2 203.2 689 213 C708.8 222.8 739.5 238.2 759 248 C778.5 257.8 788.3 263.0 806 272 C823.7 281.0 845.5 293.7 865 302 C884.5 310.3 906.8 316.7 923 322 C939.2 327.3 949.2 331.3 962 334 C974.8 336.7 982.5 336.0 1000 338 C1017.5 340.0 1042.7 344.8 1067 346 C1091.3 347.2 1120.2 345.8 1146 345 C1171.8 344.2 1199.0 343.2 1222 341 C1245.0 338.8 1261.8 336.8 1284 332 C1306.2 327.2 1335.7 316.8 1355 312 C1374.3 307.2 1385.2 306.7 1400 303 C1414.8 299.3 1432.3 294.5 1444 290 C1455.7 285.5 1460.3 279.0 1470 276 C1479.7 273.0 1496.7 272.7 1502 272" fill="none" stroke="#ffffff" stroke-width="2.2" stroke-linejoin="round" stroke-linecap="round"/>
<path d="M713 82 C713.8 85.8 716.5 97.0 718 105 C719.5 113.0 720.8 122.5 722 130 C723.2 137.5 725.7 143.2 725 150 C724.3 156.8 720.9 165.2 718 171 C715.1 176.8 711.7 180.2 707.5 185 C703.3 189.8 697.4 193.0 693 199.5 C688.6 206.0 683.7 216.5 681 224 C678.3 231.5 678.5 234.3 676.8 244.5 C675.1 254.7 671.7 278.6 670.7 285.4" fill="none" stroke="#dadada" stroke-width="4.0" stroke-linejoin="round" stroke-linecap="round"/>
<path d="M713 82 C713.8 85.8 716.5 97.0 718 105 C719.5 113.0 720.8 122.5 722 130 C723.2 137.5 725.7 143.2 725 150 C724.3 156.8 720.9 165.2 718 171 C715.1 176.8 711.7 180.2 707.5 185 C703.3 189.8 697.4 193.0 693 199.5 C688.6 206.0 683.7 216.5 681 224 C678.3 231.5 678.5 234.3 676.8 244.5 C675.1 254.7 671.7 278.6 670.7 285.4" fill="none" stroke="#ffffff" stroke-width="2.2" stroke-linejoin="round" stroke-linecap="round"/>
<path d="M725 150 C727.5 149.7 734.2 147.8 740 148 C745.8 148.2 756.5 149.3 760 151 C763.5 152.7 763.5 156.7 761 158 C758.5 159.3 750.5 159.5 745 159 C739.5 158.5 732.2 154.0 728 155 C723.8 156.0 721.3 163.3 720 165" fill="none" stroke="#dadada" stroke-width="3.6" stroke-linejoin="round" stroke-linecap="round"/>
<path d="M725 150 C727.5 149.7 734.2 147.8 740 148 C745.8 148.2 756.5 149.3 760 151 C763.5 152.7 763.5 156.7 761 158 C758.5 159.3 750.5 159.5 745 159 C739.5 158.5 732.2 154.0 728 155 C723.8 156.0 721.3 163.3 720 165" fill="none" stroke="#ffffff" stroke-width="1.8" stroke-linejoin="round" stroke-linecap="round"/>
<path d="M886 312 C882.8 317.8 875.3 332.0 867 347 C858.7 362.0 846.5 385.3 836 402 C825.5 418.7 813.5 434.3 804 447 C794.5 459.7 785.7 469.7 779 478 C772.3 486.3 768.8 491.2 764 497 C759.2 502.8 755.5 507.1 750 513 C744.5 518.9 735.5 527.9 731 532.5 C726.5 537.1 724.4 536.6 722.8 540.7 C721.2 544.8 720.5 551.8 721.4 557.3 C722.3 562.8 725.8 567.1 728.3 574 C730.8 580.9 735.0 590.4 736.6 598.7 C738.2 607.0 738.4 615.8 738 623.6 C737.6 631.4 736.1 638.4 734 645.7 C731.9 653.1 727.9 659.4 725.6 667.7 C723.3 676.0 720.0 687.6 720 695.4 C720.0 703.2 722.8 709.7 725.6 714.7 C728.4 719.8 731.5 722.7 736.6 725.7 C741.7 728.7 748.2 730.3 756 732.6 C763.8 734.9 776.3 737.3 783.6 739.5 C790.9 741.7 797.3 744.9 800 746" fill="none" stroke="#dadada" stroke-width="4.4" stroke-linejoin="round" stroke-linecap="round"/>
<path d="M886 312 C882.8 317.8 875.3 332.0 867 347 C858.7 362.0 846.5 385.3 836 402 C825.5 418.7 813.5 434.3 804 447 C794.5 459.7 785.7 469.7 779 478 C772.3 486.3 768.8 491.2 764 497 C759.2 502.8 755.5 507.1 750 513 C744.5 518.9 735.5 527.9 731 532.5 C726.5 537.1 724.4 536.6 722.8 540.7 C721.2 544.8 720.5 551.8 721.4 557.3 C722.3 562.8 725.8 567.1 728.3 574 C730.8 580.9 735.0 590.4 736.6 598.7 C738.2 607.0 738.4 615.8 738 623.6 C737.6 631.4 736.1 638.4 734 645.7 C731.9 653.1 727.9 659.4 725.6 667.7 C723.3 676.0 720.0 687.6 720 695.4 C720.0 703.2 722.8 709.7 725.6 714.7 C728.4 719.8 731.5 722.7 736.6 725.7 C741.7 728.7 748.2 730.3 756 732.6 C763.8 734.9 776.3 737.3 783.6 739.5 C790.9 741.7 797.3 744.9 800 746" fill="none" stroke="#ffffff" stroke-width="2.6" stroke-linejoin="round" stroke-linecap="round"/>
<path d="M1502 82 C1501.8 84.2 1500.2 90.0 1501 95 C1501.8 100.0 1503.8 105.3 1507 112 C1510.2 118.7 1514.5 127.0 1520 135 C1525.5 143.0 1535.5 152.8 1540 160 C1544.5 167.2 1545.3 170.5 1547 178 C1548.7 185.5 1548.7 195.5 1550 205 C1551.3 214.5 1553.0 226.5 1555 235 C1557.0 243.5 1560.8 252.5 1562 256" fill="none" stroke="#dadada" stroke-width="4.0" stroke-linejoin="round" stroke-linecap="round"/>
<path d="M1502 82 C1501.8 84.2 1500.2 90.0 1501 95 C1501.8 100.0 1503.8 105.3 1507 112 C1510.2 118.7 1514.5 127.0 1520 135 C1525.5 143.0 1535.5 152.8 1540 160 C1544.5 167.2 1545.3 170.5 1547 178 C1548.7 185.5 1548.7 195.5 1550 205 C1551.3 214.5 1553.0 226.5 1555 235 C1557.0 243.5 1560.8 252.5 1562 256" fill="none" stroke="#ffffff" stroke-width="2.2" stroke-linejoin="round" stroke-linecap="round"/>
<path d="M962 83 L960 100 L963 116 L964 130 L975 146 L982 160 L988 174 L986 189 L979 196 L977 208" fill="none" stroke="#86dff9" stroke-width="2" stroke-linejoin="round"/>
<path d="M973.089 203.162 C972.4 205.4 971.3 209.8 969.192 216.626 C967.1 223.5 963.6 235.6 960.333 244.205 C957.0 252.8 952.9 260.0 949.419 267.996 C945.9 276.0 942.4 284.9 939.388 292.069 C936.4 299.3 934.0 304.8 931.535 311.238 C929.1 317.7 926.8 323.7 924.71 330.64 C922.6 337.6 921.0 345.1 918.958 352.858 C916.9 360.6 914.2 369.3 912.226 377.016 C910.3 384.7 908.8 392.2 907.382 399.225 C906.0 406.3 904.9 412.7 903.666 419.333 C902.4 426.0 901.3 432.7 899.878 439.298 C898.4 445.9 897.4 452.4 895.086 458.944 C892.8 465.4 889.8 472.9 886.03 478.297 C882.3 483.7 879.1 486.1 872.753 491.517 C866.4 496.9 855.1 505.3 848.054 510.685 C841.0 516.0 836.2 520.0 830.504 523.633 C824.8 527.3 819.7 530.3 814.035 532.478 C808.4 534.7 801.8 535.5 796.407 536.869 C791.0 538.2 785.2 538.1 781.712 540.475 C778.2 542.9 776.3 546.7 775.34 551.381 C774.4 556.1 775.4 563.4 776.013 568.53 C776.6 573.7 778.2 577.8 779.134 582.357 C780.0 587.0 781.0 589.9 781.506 596.142 C782.0 602.4 782.2 616.1 782.301 620.05 L785.699 619.95 C785.6 615.9 785.6 602.2 785.094 595.858 C784.6 589.5 783.7 586.3 782.866 581.643 C782.0 577.0 780.5 573.0 779.987 568.07 C779.5 563.2 778.9 556.1 779.66 552.219 C780.4 548.3 781.3 546.2 784.288 544.525 C787.3 542.8 792.3 543.1 797.593 541.931 C802.9 540.8 810.0 539.8 815.965 537.522 C821.9 535.3 827.6 532.1 833.496 528.367 C839.4 524.7 844.4 520.7 851.546 515.315 C858.7 509.9 870.1 501.7 876.647 496.083 C883.2 490.5 886.9 487.5 890.97 481.703 C895.0 475.9 898.4 467.9 900.914 461.056 C903.4 454.2 904.6 447.4 906.122 440.702 C907.7 434.0 908.9 427.3 910.334 420.667 C911.7 414.0 913.0 407.7 914.618 400.775 C916.2 393.8 917.7 386.6 919.774 378.984 C921.8 371.4 924.8 362.7 927.042 355.142 C929.3 347.5 931.1 340.1 933.29 333.36 C935.5 326.6 937.9 321.0 940.465 314.762 C943.0 308.5 945.6 303.1 948.612 295.931 C951.6 288.8 955.1 280.0 958.581 272.004 C962.1 264.0 966.3 256.6 969.667 247.795 C973.0 239.0 976.9 226.5 978.808 219.374 C980.7 212.2 980.6 207.3 980.911 204.838 Z" fill="#86dff9"/>
<path d="M782.600 612 L767 634.6 L787.7 658 L786.300 634 L785.600 612 Z" fill="#86dff9"/>
<path d="M1020 82 L1031 94 L1044 92 L1047 117 L1038 132 L1044 150 L1067 161 L1078 168 L1095 159 L1111 143 L1116 145 L1126 188 L1135 203 L1169 230 L1195 214 L1222 192 L1242 179 L1253 183 L1250 203 L1262 205 L1277 185 L1291 163 L1300 165 L1311 179 L1333 190 L1364 192 L1462 208 L1475 205 L1493 157 L1510 126 L1526 111 L1530 112 L1553 137" fill="none" stroke="#86dff9" stroke-width="1.5" stroke-linejoin="round"/>
<path d="M672 298 C671.0 299.0 667.5 300.7 666 304 C664.5 307.3 664.0 311.0 663 318 C662.0 325.0 661.1 337.7 660 346 C658.9 354.3 657.6 362.3 656.6 368 C655.6 373.7 654.7 375.3 654 380 C653.3 384.7 653.3 389.3 652.6 396 C651.9 402.7 649.4 412.2 650 420 C650.6 427.8 652.7 435.3 656 443 C659.3 450.7 665.8 459.8 670 466 C674.2 472.2 676.5 476.0 681 480 C685.5 484.0 691.0 486.8 697 490 C703.0 493.2 708.2 493.8 717 499 C725.8 504.2 739.8 514.0 750 521 C760.2 528.0 769.7 535.4 778 540.7 C786.3 546.0 793.5 550.0 800 553 C806.5 556.0 810.2 557.1 816.7 558.7 C823.2 560.3 835.1 562.1 838.8 562.8" fill="none" stroke="#fbd595" stroke-width="6.4" stroke-linejoin="round" stroke-linecap="butt"/>
<path d="M672 298 C671.0 299.0 667.5 300.7 666 304 C664.5 307.3 664.0 311.0 663 318 C662.0 325.0 661.1 337.7 660 346 C658.9 354.3 657.6 362.3 656.6 368 C655.6 373.7 654.7 375.3 654 380 C653.3 384.7 653.3 389.3 652.6 396 C651.9 402.7 649.4 412.2 650 420 C650.6 427.8 652.7 435.3 656 443 C659.3 450.7 665.8 459.8 670 466 C674.2 472.2 676.5 476.0 681 480 C685.5 484.0 691.0 486.8 697 490 C703.0 493.2 708.2 493.8 717 499 C725.8 504.2 739.8 514.0 750 521 C760.2 528.0 769.7 535.4 778 540.7 C786.3 546.0 793.5 550.0 800 553 C806.5 556.0 810.2 557.1 816.7 558.7 C823.2 560.3 835.1 562.1 838.8 562.8" fill="none" stroke="#ffe6b8" stroke-width="5.0" stroke-linejoin="round" stroke-linecap="butt"/>
<path d="M838.8 562.8 C840.2 561.8 845.2 559.8 847 557 C848.8 554.2 848.9 550.5 849.8 546 C850.7 541.5 851.2 534.7 852.6 530 C854.0 525.3 857.1 520.0 858 518" fill="none" stroke="#fbd595" stroke-width="3.4000000000000004" stroke-linejoin="round" stroke-linecap="butt"/>
<path d="M838.8 562.8 C840.2 561.8 845.2 559.8 847 557 C848.8 554.2 848.9 550.5 849.8 546 C850.7 541.5 851.2 534.7 852.6 530 C854.0 525.3 857.1 520.0 858 518" fill="none" stroke="#ffe6b8" stroke-width="2.2" stroke-linejoin="round" stroke-linecap="butt"/>
<path d="M800 553 C801.8 556.0 809.4 565.7 811 571 C812.6 576.3 810.6 580.5 809.8 585 C809.0 589.5 806.6 595.8 806 598" fill="none" stroke="#fbd595" stroke-width="3.4000000000000004" stroke-linejoin="round" stroke-linecap="butt"/>
<path d="M800 553 C801.8 556.0 809.4 565.7 811 571 C812.6 576.3 810.6 580.5 809.8 585 C809.0 589.5 806.6 595.8 806 598" fill="none" stroke="#ffe6b8" stroke-width="2.2" stroke-linejoin="round" stroke-linecap="butt"/>
<path d="M806 553 C810.5 551.8 826.2 549.0 833 546 C839.8 543.0 843.2 539.0 847 535 C850.8 531.0 854.5 524.2 856 522" fill="none" stroke="#fbd595" stroke-width="3.4000000000000004" stroke-linejoin="round" stroke-linecap="butt"/>
<path d="M806 553 C810.5 551.8 826.2 549.0 833 546 C839.8 543.0 843.2 539.0 847 535 C850.8 531.0 854.5 524.2 856 522" fill="none" stroke="#ffe6b8" stroke-width="2.2" stroke-linejoin="round" stroke-linecap="butt"/>
<path d="M662 287 C666.5 291.0 679.3 303.8 689 311 C698.7 318.2 707.0 322.3 720 330 C733.0 337.7 752.7 348.5 767 357 C781.3 365.5 793.0 373.2 806 381 C819.0 388.8 833.3 397.5 845 404 C856.7 410.5 865.7 415.8 876 420 C886.3 424.2 896.0 426.5 907 429 C918.0 431.5 930.3 433.5 942 435 C953.7 436.5 967.3 436.8 977 438 C986.7 439.2 986.9 441.4 1000 442.5 C1013.1 443.6 1029.6 443.4 1055.6 444.5 C1081.5 445.6 1131.6 448.6 1155.7 449 C1179.8 449.4 1188.9 448.2 1200 446.7 C1211.1 445.2 1215.0 442.8 1222.5 440 C1230.0 437.2 1237.3 433.9 1244.7 430 C1252.1 426.1 1259.6 420.9 1267 416.7 C1274.4 412.4 1279.7 409.7 1289 404.5 C1298.3 399.3 1313.1 391.4 1322.6 385.6 C1332.1 379.9 1333.1 377.6 1346 370 C1358.9 362.4 1387.2 346.8 1400 339.7 C1412.8 332.6 1415.0 331.9 1422.5 327.4 C1430.0 322.9 1437.5 317.8 1445 312.7 C1452.5 307.6 1460.0 301.9 1467.5 297 C1475.0 292.1 1482.5 287.7 1490 283.5 C1497.5 279.3 1505.0 275.2 1512.5 272 C1520.0 268.8 1527.5 266.8 1535 264.4 C1542.5 262.0 1550.0 259.7 1557.5 257.6 C1565.0 255.5 1572.5 253.8 1580 252 C1587.5 250.2 1595.0 248.4 1602.5 247 C1610.0 245.6 1613.8 244.7 1625 243.4 C1636.2 242.1 1655.0 240.2 1670 239 C1685.0 237.8 1700.0 236.7 1715 236 C1730.0 235.3 1747.5 235.0 1760 234.7 C1772.5 234.4 1785.0 234.4 1790 234.4" fill="none" stroke="#fbd595" stroke-width="4.8" stroke-linejoin="round" stroke-linecap="butt"/>
<path d="M662 287 C666.5 291.0 679.3 303.8 689 311 C698.7 318.2 707.0 322.3 720 330 C733.0 337.7 752.7 348.5 767 357 C781.3 365.5 793.0 373.2 806 381 C819.0 388.8 833.3 397.5 845 404 C856.7 410.5 865.7 415.8 876 420 C886.3 424.2 896.0 426.5 907 429 C918.0 431.5 930.3 433.5 942 435 C953.7 436.5 967.3 436.8 977 438 C986.7 439.2 986.9 441.4 1000 442.5 C1013.1 443.6 1029.6 443.4 1055.6 444.5 C1081.5 445.6 1131.6 448.6 1155.7 449 C1179.8 449.4 1188.9 448.2 1200 446.7 C1211.1 445.2 1215.0 442.8 1222.5 440 C1230.0 437.2 1237.3 433.9 1244.7 430 C1252.1 426.1 1259.6 420.9 1267 416.7 C1274.4 412.4 1279.7 409.7 1289 404.5 C1298.3 399.3 1313.1 391.4 1322.6 385.6 C1332.1 379.9 1333.1 377.6 1346 370 C1358.9 362.4 1387.2 346.8 1400 339.7 C1412.8 332.6 1415.0 331.9 1422.5 327.4 C1430.0 322.9 1437.5 317.8 1445 312.7 C1452.5 307.6 1460.0 301.9 1467.5 297 C1475.0 292.1 1482.5 287.7 1490 283.5 C1497.5 279.3 1505.0 275.2 1512.5 272 C1520.0 268.8 1527.5 266.8 1535 264.4 C1542.5 262.0 1550.0 259.7 1557.5 257.6 C1565.0 255.5 1572.5 253.8 1580 252 C1587.5 250.2 1595.0 248.4 1602.5 247 C1610.0 245.6 1613.8 244.7 1625 243.4 C1636.2 242.1 1655.0 240.2 1670 239 C1685.0 237.8 1700.0 236.7 1715 236 C1730.0 235.3 1747.5 235.0 1760 234.7 C1772.5 234.4 1785.0 234.4 1790 234.4" fill="none" stroke="#ffe6b8" stroke-width="3.5" stroke-linejoin="round" stroke-linecap="butt"/>
<path d="M573.2 164 C575.3 165.8 581.5 170.7 585.7 175 C589.9 179.3 594.0 184.2 598.2 190 C602.4 195.8 606.6 203.3 610.8 210 C615.0 216.7 619.1 223.3 623.3 230 C627.5 236.7 631.6 243.7 635.8 250 C640.0 256.3 643.9 261.8 648.3 268 C652.7 274.2 659.7 283.8 662 287" fill="none" stroke="#fbd595" stroke-width="5.7" stroke-linejoin="round" stroke-linecap="butt"/>
<path d="M573.2 164 C575.3 165.8 581.5 170.7 585.7 175 C589.9 179.3 594.0 184.2 598.2 190 C602.4 195.8 606.6 203.3 610.8 210 C615.0 216.7 619.1 223.3 623.3 230 C627.5 236.7 631.6 243.7 635.8 250 C640.0 256.3 643.9 261.8 648.3 268 C652.7 274.2 659.7 283.8 662 287" fill="none" stroke="#ffe6b8" stroke-width="4.4" stroke-linejoin="round" stroke-linecap="butt"/>
<path d="M319 101 C321.7 102.5 328.2 106.0 335 110 C341.8 114.0 351.6 121.0 360 125 C368.4 129.0 376.8 131.7 385.2 134 C393.6 136.3 401.9 137.7 410.3 139 C418.7 140.3 427.0 141.0 435.3 142 C443.6 143.0 452.0 144.1 460.4 145 C468.8 145.9 477.0 146.9 485.4 147.7 C493.8 148.5 502.1 149.1 510.5 150 C518.9 150.9 528.1 151.9 535.6 153 C543.1 154.1 549.3 154.7 555.6 156.5 C561.9 158.3 570.3 162.8 573.2 164" fill="none" stroke="#fbd595" stroke-width="6.6" stroke-linejoin="round" stroke-linecap="butt"/>
<path d="M319 101 C321.7 102.5 328.2 106.0 335 110 C341.8 114.0 351.6 121.0 360 125 C368.4 129.0 376.8 131.7 385.2 134 C393.6 136.3 401.9 137.7 410.3 139 C418.7 140.3 427.0 141.0 435.3 142 C443.6 143.0 452.0 144.1 460.4 145 C468.8 145.9 477.0 146.9 485.4 147.7 C493.8 148.5 502.1 149.1 510.5 150 C518.9 150.9 528.1 151.9 535.6 153 C543.1 154.1 549.3 154.7 555.6 156.5 C561.9 158.3 570.3 162.8 573.2 164" fill="none" stroke="#ffe6b8" stroke-width="5.2" stroke-linejoin="round" stroke-linecap="butt"/>
<path d="M784.8 748 C785.1 741.8 785.3 726.2 786.5 711 C787.7 695.8 790.0 671.0 791.8 656.7 C793.5 642.4 794.7 635.1 797 625 C799.3 614.9 802.9 603.2 805.7 596 C808.5 588.8 810.3 588.0 814 582 C817.7 576.0 822.7 568.7 827.7 560 C832.8 551.3 838.8 538.0 844.3 529.7 C849.8 521.4 853.5 516.9 860.9 510.4 C868.3 503.9 879.3 496.1 888.5 491 C897.7 485.9 907.1 483.5 916 480 C924.9 476.5 933.0 473.5 942 470 C951.0 466.5 960.3 462.2 970 459 C979.7 455.8 985.7 452.2 1000 451 C1014.3 449.8 1035.3 451.2 1055.6 452 C1075.9 452.8 1101.6 454.8 1122 455.6 C1142.4 456.4 1165.0 457.0 1178 456.8 C1191.0 456.6 1193.0 455.2 1200 454.3 C1207.0 453.4 1213.3 452.8 1220 451.4 C1226.7 450.0 1233.3 448.3 1240 446.1 C1246.7 443.9 1253.3 440.9 1260 438.3 C1266.7 435.7 1273.3 433.0 1280 430.3 C1286.7 427.6 1293.3 424.9 1300 422.3 C1306.7 419.7 1313.3 417.3 1320 414.9 C1326.7 412.4 1333.3 410.0 1340 407.6 C1346.7 405.2 1353.3 402.7 1360 400.3 C1366.7 397.9 1373.3 395.4 1380 393.2 C1386.7 391.0 1393.3 389.0 1400 387 C1406.7 385.0 1411.4 383.6 1420 381 C1428.6 378.4 1437.6 375.6 1451.7 371.2 C1465.8 366.8 1487.0 359.4 1504.6 354.4 C1522.2 349.3 1540.1 345.0 1557.5 340.9 C1574.9 336.8 1594.0 332.4 1609 329.6 C1624.0 326.8 1629.8 326.4 1647.5 324 C1665.2 321.6 1691.2 316.9 1715 315 C1738.8 313.1 1777.5 312.8 1790 312.3" fill="none" stroke="#fba85c" stroke-width="7.4"/>
<path d="M784.8 748 C785.1 741.8 785.3 726.2 786.5 711 C787.7 695.8 790.0 671.0 791.8 656.7 C793.5 642.4 794.7 635.1 797 625 C799.3 614.9 802.9 603.2 805.7 596 C808.5 588.8 810.3 588.0 814 582 C817.7 576.0 822.7 568.7 827.7 560 C832.8 551.3 838.8 538.0 844.3 529.7 C849.8 521.4 853.5 516.9 860.9 510.4 C868.3 503.9 879.3 496.1 888.5 491 C897.7 485.9 907.1 483.5 916 480 C924.9 476.5 933.0 473.5 942 470 C951.0 466.5 960.3 462.2 970 459 C979.7 455.8 985.7 452.2 1000 451 C1014.3 449.8 1035.3 451.2 1055.6 452 C1075.9 452.8 1101.6 454.8 1122 455.6 C1142.4 456.4 1165.0 457.0 1178 456.8 C1191.0 456.6 1193.0 455.2 1200 454.3 C1207.0 453.4 1213.3 452.8 1220 451.4 C1226.7 450.0 1233.3 448.3 1240 446.1 C1246.7 443.9 1253.3 440.9 1260 438.3 C1266.7 435.7 1273.3 433.0 1280 430.3 C1286.7 427.6 1293.3 424.9 1300 422.3 C1306.7 419.7 1313.3 417.3 1320 414.9 C1326.7 412.4 1333.3 410.0 1340 407.6 C1346.7 405.2 1353.3 402.7 1360 400.3 C1366.7 397.9 1373.3 395.4 1380 393.2 C1386.7 391.0 1393.3 389.0 1400 387 C1406.7 385.0 1411.4 383.6 1420 381 C1428.6 378.4 1437.6 375.6 1451.7 371.2 C1465.8 366.8 1487.0 359.4 1504.6 354.4 C1522.2 349.3 1540.1 345.0 1557.5 340.9 C1574.9 336.8 1594.0 332.4 1609 329.6 C1624.0 326.8 1629.8 326.4 1647.5 324 C1665.2 321.6 1691.2 316.9 1715 315 C1738.8 313.1 1777.5 312.8 1790 312.3" fill="none" stroke="#ffb170" stroke-width="5.6"/>
<text x="326" y="101" font-family="Liberation Sans, Noto Sans CJK SC, sans-serif" font-size="13" font-weight="500" fill="#333" text-anchor="middle" dominant-baseline="central" stroke="#fff" stroke-width="2.5" paint-order="stroke" stroke-linejoin="round" transform="rotate(40 326 101)">港线</text>
<text x="462" y="143" font-family="Liberation Sans, Noto Sans CJK SC, sans-serif" font-size="13" font-weight="500" fill="#333" text-anchor="middle" dominant-baseline="central" stroke="#fff" stroke-width="2.5" paint-order="stroke" stroke-linejoin="round" transform="rotate(8 462 143)">长盛路</text>
<text x="541" y="130" font-family="Liberation Sans, Noto Sans CJK SC, sans-serif" font-size="12" font-weight="normal" fill="#777" text-anchor="middle" dominant-baseline="central" stroke="#fff" stroke-width="2.5" paint-order="stroke" stroke-linejoin="round" transform="rotate(30 541 130)">长白路</text>
<text x="779" y="260.5" font-family="Liberation Sans, Noto Sans CJK SC, sans-serif" font-size="12" font-weight="normal" fill="#777" text-anchor="middle" dominant-baseline="central" stroke="#fff" stroke-width="2.5" paint-order="stroke" stroke-linejoin="round" transform="rotate(25 779 260.5)">长安西路</text>
<text x="733" y="342" font-family="Liberation Sans, Noto Sans CJK SC, sans-serif" font-size="13" font-weight="500" fill="#333" text-anchor="middle" dominant-baseline="central" stroke="#fff" stroke-width="2.5" paint-order="stroke" stroke-linejoin="round" transform="rotate(35 733 342)">长盛路</text>
<text x="1025" y="341" font-family="Liberation Sans, Noto Sans CJK SC, sans-serif" font-size="12" font-weight="normal" fill="#777" text-anchor="middle" dominant-baseline="central" stroke="#fff" stroke-width="2.5" paint-order="stroke" stroke-linejoin="round" transform="rotate(2 1025 341)">长安路</text>
<text x="1420" y="297" font-family="Liberation Sans, Noto Sans CJK SC, sans-serif" font-size="12" font-weight="normal" fill="#777" text-anchor="middle" dominant-baseline="central" stroke="#fff" stroke-width="2.5" paint-order="stroke" stroke-linejoin="round" transform="rotate(-13 1420 297)">长安东路</text>
<text x="1659" y="243" font-family="Liberation Sans, Noto Sans CJK SC, sans-serif" font-size="13" font-weight="500" fill="#333" text-anchor="middle" dominant-baseline="central" stroke="#fff" stroke-width="2.5" paint-order="stroke" stroke-linejoin="round" transform="rotate(-2 1659 243)">京港线</text>
<text x="1675" y="324" font-family="Liberation Sans, Noto Sans CJK SC, sans-serif" font-size="13" font-weight="500" fill="#333" text-anchor="middle" dominant-baseline="central" stroke="#fff" stroke-width="2.5" paint-order="stroke" stroke-linejoin="round" transform="rotate(-5 1675 324)">京港澳高速</text>
<text x="1281" y="408" font-family="Liberation Sans, Noto Sans CJK SC, sans-serif" font-size="13" font-weight="500" fill="#333" text-anchor="middle" dominant-baseline="central" stroke="#fff" stroke-width="2.5" paint-order="stroke" stroke-linejoin="round" transform="rotate(-28 1281 408)">长盛路</text>
<text x="1005" y="441" font-family="Liberation Sans, Noto Sans CJK SC, sans-serif" font-size="13" font-weight="500" fill="#333" text-anchor="middle" dominant-baseline="central" stroke="#fff" stroke-width="2.5" paint-order="stroke" stroke-linejoin="round" transform="rotate(3 1005 441)">长盛中路</text>
<text x="1165" y="457" font-family="Liberation Sans, Noto Sans CJK SC, sans-serif" font-size="13" font-weight="500" fill="#333" text-anchor="middle" dominant-baseline="central" stroke="#fff" stroke-width="2.5" paint-order="stroke" stroke-linejoin="round" transform="rotate(1 1165 457)">京港澳高速</text>
<text x="805.6" y="591.8" font-family="Liberation Sans, Noto Sans CJK SC, sans-serif" font-size="13" font-weight="500" fill="#333" text-anchor="middle" dominant-baseline="central" stroke="#fff" stroke-width="2.5" paint-order="stroke" stroke-linejoin="round" transform="rotate(8 805.6 591.8)">京</text>
<text x="801.5" y="607" font-family="Liberation Sans, Noto Sans CJK SC, sans-serif" font-size="13" font-weight="500" fill="#333" text-anchor="middle" dominant-baseline="central" stroke="#fff" stroke-width="2.5" paint-order="stroke" stroke-linejoin="round" transform="rotate(8 801.5 607)">港</text>
<text x="798.7" y="620.8" font-family="Liberation Sans, Noto Sans CJK SC, sans-serif" font-size="13" font-weight="500" fill="#333" text-anchor="middle" dominant-baseline="central" stroke="#fff" stroke-width="2.5" paint-order="stroke" stroke-linejoin="round" transform="rotate(8 798.7 620.8)">澳</text>
<text x="795.4" y="634.6" font-family="Liberation Sans, Noto Sans CJK SC, sans-serif" font-size="13" font-weight="500" fill="#333" text-anchor="middle" dominant-baseline="central" stroke="#fff" stroke-width="2.5" paint-order="stroke" stroke-linejoin="round" transform="rotate(8 795.4 634.6)">高</text>
<text x="793.2" y="649.8" font-family="Liberation Sans, Noto Sans CJK SC, sans-serif" font-size="13" font-weight="500" fill="#333" text-anchor="middle" dominant-baseline="central" stroke="#fff" stroke-width="2.5" paint-order="stroke" stroke-linejoin="round" transform="rotate(8 793.2 649.8)">速</text>
<text x="599" y="237" font-family="Liberation Sans, Noto Sans CJK SC, sans-serif" font-size="12" font-weight="normal" fill="#3d7ddb" text-anchor="start" dominant-baseline="central" stroke="#fff" stroke-width="2.5" paint-order="stroke" stroke-linejoin="round">临湘长安汽车站</text>
<rect x="689" y="227" width="16" height="16" rx="3" fill="#3d8bf2"/><rect x="693" y="231" width="8" height="7" rx="1.5" fill="none" stroke="#fff" stroke-width="1.3"/>
<circle cx="842" cy="314" r="6.5" fill="#fff" stroke="#e8413d" stroke-width="1.6"/><circle cx="842" cy="314" r="2.6" fill="#e8413d"/>
<text x="856" y="314" font-family="Liberation Sans, Noto Sans CJK SC, sans-serif" font-size="12" font-weight="normal" fill="#e8413d" text-anchor="start" dominant-baseline="central" stroke="#fff" stroke-width="2.5" paint-order="stroke" stroke-linejoin="round">临湘市政府</text>
<path d="M1241 310 q0 -3 3 -3 h12 q3 0 3 3 v11 q0 3 -3 3 h-3.500 l-2.500 3.500 l-2.500 -3.500 h-3.500 q-3 0 -3 -3 Z" fill="#3d8bf2"/><path d="M1245.800 318.500 v-3.200 a4.200 4.200 0 0 1 8.400 0 v3.200" fill="none" stroke="#fff" stroke-width="1.700"/><path d="M1244.500 320.600 h11" stroke="#fff" stroke-width="1.600"/><circle cx="1250" cy="315.600" r="1.500" fill="#fff"/>
<text x="1263" y="317" font-family="Liberation Sans, Noto Sans CJK SC, sans-serif" font-size="12" font-weight="normal" fill="#3d7ddb" text-anchor="start" dominant-baseline="central" stroke="#fff" stroke-width="2.5" paint-order="stroke" stroke-linejoin="round">临湘站</text>
<path d="M1060.600 411 a9 9 0 1 1 -0.010 0 Z M1057 427.500 L1060.600 432 L1064.200 427.500 Z" fill="#19c0d8"/>
<text x="1060.6" y="420" font-family="Liberation Sans, Noto Sans CJK SC, sans-serif" font-size="10" font-weight="bold" fill="#fff" text-anchor="middle" dominant-baseline="central">文</text>
<text x="1072" y="420" font-family="Liberation Sans, Noto Sans CJK SC, sans-serif" font-size="12" font-weight="normal" fill="#2a9ec4" text-anchor="start" dominant-baseline="central" stroke="#fff" stroke-width="2.5" paint-order="stroke" stroke-linejoin="round">临湘市第一中学</text>
<rect x="1609" y="324.500" width="15" height="10.5" rx="1.5" fill="#1fc0a0"/><path d="M1609 326.8 V326 q0 -1.5 1.5 -1.5 h12 q1.5 0 1.500 1.500 v0.800 Z" fill="#e8413d"/>
<text x="1616.5" y="331" font-family="Liberation Sans, Noto Sans CJK SC, sans-serif" font-size="7" font-weight="bold" fill="#fff" text-anchor="middle" dominant-baseline="central">G4</text>
<rect x="725.5" y="627.5" width="23" height="13" rx="2" fill="#fff" stroke="#c8ccd4"/>
<text x="737" y="634.3" font-family="Liberation Sans, Noto Sans CJK SC, sans-serif" font-size="8" font-weight="normal" fill="#777" text-anchor="middle" dominant-baseline="central">X089</text>
<g><text x="324" y="729" font-family="Liberation Sans, sans-serif" font-size="14" font-weight="bold" fill="#e10602" letter-spacing="-0.8">Bai</text><g fill="#2932e1"><ellipse cx="356.5" cy="726" rx="7.2" ry="6.2"/><ellipse cx="349.2" cy="719.4" rx="2" ry="2.7"/><ellipse cx="353.8" cy="715.2" rx="2" ry="2.7"/><ellipse cx="359.4" cy="715.2" rx="2" ry="2.7"/><ellipse cx="363.8" cy="719.4" rx="2" ry="2.7"/></g><text x="356.5" y="729.6" font-family="Liberation Sans, sans-serif" font-size="8" font-weight="bold" fill="#fff" text-anchor="middle">du</text><text x="365" y="729" font-family="Liberation Sans, Noto Sans CJK SC, sans-serif" font-size="11" font-weight="bold" fill="#e10602" letter-spacing="-1">地图</text></g>
<path d="M400.500 721.500 V726.300 H462.500 V721.500" fill="none" stroke="#000" stroke-width="1.600"/><path d="M400 726.300 H463" stroke="#000" stroke-width="3"/>
<text x="431" y="721" font-family="Liberation Sans, Noto Sans CJK SC, sans-serif" font-size="11" fill="#000" text-anchor="middle">500 米</text>
<rect x="319" y="730" width="455" height="12.5" fill="#ffffff" fill-opacity="0.6"/>
<text x="322" y="740" font-family="Liberation Sans, Noto Sans CJK SC, sans-serif" font-size="11" fill="#000" textLength="448" lengthAdjust="spacing">© 2025 Baidu - GS(2023)3206号 - 甲测资字11111342 - 京ICP证030173号 - Data © 百度智图</text>
<use href="#p" x="996.0" y="353.4"/>
<use href="#p" x="686.5" y="229.7"/>
<use href="#p" x="766.0" y="241.4"/>
<use href="#p" x="895.6" y="229.7"/>
<use href="#p" x="894.4" y="302.9"/>
<use href="#p" x="751.5" y="366.0"/>
<use href="#p" x="752.7" y="373.7"/>
<use href="#p" x="792.4" y="418.5"/>
<use href="#p" x="942.3" y="457.0"/>
<use href="#p" x="789.3" y="474.6"/>
<use href="#p" x="778.0" y="486.0"/>
<use href="#p" x="1463.4" y="313.7"/>
<use href="#p" x="1150.9" y="358.0"/>
<use href="#p" x="1179.3" y="404.7"/>
<use href="#p" x="502.0" y="122.7"/>
<use href="#p" x="573.3" y="166.6"/>
<use href="#p" x="744.2" y="167.4"/>
<use href="#p" x="753.0" y="200.5"/>
<use href="#p" x="687.0" y="201.7"/>
<use href="#p" x="642.2" y="207.0"/>
<use href="#p" x="894.8" y="208.3"/>
<use href="#p" x="672.5" y="209.5"/>
<use href="#p" x="953.2" y="220.0"/>
<use href="#p" x="777.2" y="222.0"/>
<use href="#p" x="1345.3" y="223.6"/>
<use href="#p" x="767.9" y="225.8"/>
<use href="#p" x="803.0" y="225.8"/>
<use href="#p" x="1120.3" y="225.8"/>
<use href="#p" x="676.8" y="227.8"/>
<use href="#p" x="987.0" y="237.5"/>
<use href="#p" x="644.0" y="242.0"/>
<use href="#p" x="976.0" y="245.3"/>
<use href="#p" x="713.0" y="248.4"/>
<use href="#p" x="851.2" y="251.9"/>
<use href="#p" x="690.8" y="257.7"/>
<use href="#p" x="738.0" y="260.8"/>
<use href="#p" x="630.0" y="267.5"/>
<use href="#p" x="907.6" y="271.4"/>
<use href="#p" x="1546.4" y="275.0"/>
<use href="#p" x="759.3" y="277.2"/>
<use href="#p" x="926.0" y="281.0"/>
<use href="#p" x="778.0" y="281.9"/>
<use href="#p" x="961.0" y="287.0"/>
<use href="#p" x="1019.0" y="288.4"/>
<use href="#p" x="680.0" y="288.9"/>
<use href="#p" x="1269.9" y="292.4"/>
<use href="#p" x="1507.3" y="296.0"/>
<use href="#p" x="1461.2" y="299.5"/>
<use href="#p" x="820.8" y="299.8"/>
<use href="#p" x="902.6" y="299.8"/>
<use href="#p" x="1358.6" y="300.4"/>
<use href="#p" x="749.6" y="308.3"/>
<use href="#p" x="840.3" y="309.0"/>
<use href="#p" x="963.0" y="312.0"/>
<use href="#p" x="688.0" y="314.6"/>
<use href="#p" x="1190.9" y="314.6"/>
<use href="#p" x="760.9" y="316.0"/>
<use href="#p" x="669.8" y="321.0"/>
<use href="#p" x="1060.4" y="323.4"/>
<use href="#p" x="875.0" y="325.8"/>
<use href="#p" x="1163.3" y="330.0"/>
<use href="#p" x="752.0" y="332.5"/>
<use href="#p" x="1441.2" y="335.0"/>
<use href="#p" x="1333.3" y="335.0"/>
<use href="#p" x="684.6" y="337.5"/>
<use href="#p" x="843.8" y="337.5"/>
<use href="#p" x="1109.2" y="339.0"/>
<use href="#p" x="1313.4" y="340.3"/>
<use href="#p" x="857.8" y="342.6"/>
<use href="#p" x="924.0" y="342.6"/>
<use href="#p" x="912.7" y="343.4"/>
<use href="#p" x="987.8" y="344.5"/>
<use href="#p" x="957.0" y="345.7"/>
<use href="#p" x="817.7" y="347.0"/>
<use href="#p" x="667.0" y="348.8"/>
<use href="#p" x="868.3" y="352.0"/>
<use href="#p" x="971.5" y="354.0"/>
<use href="#p" x="654.6" y="355.0"/>
<use href="#p" x="1238.8" y="355.8"/>
<use href="#p" x="741.8" y="359.0"/>
<use href="#p" x="1038.2" y="361.2"/>
<use href="#p" x="1057.3" y="362.5"/>
<use href="#p" x="1150.0" y="364.7"/>
<use href="#p" x="1249.4" y="367.0"/>
<use href="#p" x="1101.2" y="367.0"/>
<use href="#p" x="915.0" y="371.8"/>
<use href="#p" x="1376.4" y="372.3"/>
<use href="#p" x="1326.2" y="372.7"/>
<use href="#p" x="978.5" y="375.7"/>
<use href="#p" x="1347.0" y="377.0"/>
<use href="#p" x="763.2" y="378.4"/>
<use href="#p" x="806.8" y="380.7"/>
<use href="#p" x="848.0" y="383.5"/>
<use href="#p" x="1351.0" y="387.4"/>
<use href="#p" x="1180.2" y="387.4"/>
<use href="#p" x="1364.8" y="398.0"/>
<use href="#p" x="869.0" y="399.0"/>
<use href="#p" x="1332.0" y="401.6"/>
<use href="#p" x="1092.8" y="401.6"/>
<use href="#p" x="1135.4" y="401.6"/>
<use href="#p" x="841.0" y="411.5"/>
<use href="#p" x="905.7" y="414.6"/>
<use href="#p" x="797.0" y="421.6"/>
<use href="#p" x="914.2" y="432.0"/>
<use href="#p" x="1229.9" y="434.4"/>
<use href="#p" x="883.9" y="438.0"/>
<use href="#p" x="896.7" y="441.8"/>
<use href="#p" x="944.6" y="443.8"/>
<use href="#p" x="1296.0" y="444.6"/>
<use href="#p" x="1242.8" y="446.0"/>
<use href="#p" x="783.8" y="448.5"/>
<use href="#p" x="1318.7" y="449.0"/>
<use href="#p" x="850.4" y="453.0"/>
<use href="#p" x="1133.5" y="453.9"/>
<use href="#p" x="1097.2" y="458.8"/>
<use href="#p" x="886.2" y="462.9"/>
<use href="#p" x="873.0" y="464.9"/>
<use href="#p" x="1129.7" y="467.7"/>
<use href="#p" x="797.0" y="472.7"/>
<use href="#p" x="1262.3" y="479.5"/>
<use href="#p" x="849.6" y="481.2"/>
<use href="#p" x="772.2" y="482.4"/>
<use href="#p" x="920.9" y="484.3"/>
<use href="#p" x="1037.3" y="488.4"/>
<use href="#p" x="719.2" y="489.0"/>
<use href="#p" x="764.0" y="504.6"/>
<use href="#p" x="1166.0" y="511.9"/>
<use href="#p" x="857.8" y="515.5"/>
<use href="#p" x="739.0" y="531.0"/>
<use href="#p" x="686.0" y="542.0"/>
<use href="#p" x="732.0" y="610.0"/>
<use href="#p" x="815.0" y="624.5"/>
<use href="#p" x="722.0" y="673.0"/>
<use href="#p" x="931.0" y="687.5"/>
<use href="#pk" x="1607.5" y="264"/>
<use href="#pr" x="1751.0" y="258.2"/>
<use href="#pr" x="1604.5" y="262.6"/>
<use href="#pr" x="1688.0" y="253.8"/>
<use href="#pr" x="1677.8" y="257.3"/>
<use href="#pr" x="1751.9" y="240.4"/>
<use href="#pk" x="1429.6" y="638.0"/>
<use href="#pk" x="1487.8" y="635.3"/>
<use href="#pk" x="1538.0" y="649.5"/>
<use href="#pk" x="1457.6" y="682.3"/>
</svg>
<div class="card" style="left:330px"></div>
<div class="card" style="left:461px"></div>
<div class="card" style="left:592px"></div>
<div class="card" style="left:723px"></div>
<div class="card" style="left:854px"></div>
<div class="card" style="left:985px"></div>
<div class="card" style="left:1116px"></div>
<div class="card" style="left:1247px"></div>
<svg class="abs" style="left:316px;top:800px" width="1070" height="150" viewBox="316 800 1070 150">
<g fill="#118a12"><path fill-rule="evenodd" d="M389.8 825 a25.8 25.8 0 1 0 0.01 0 Z M389.8 832.4 a18.4 18.4 0 1 1 -0.01 0 Z"/><rect x="378.0" y="871" width="23.6" height="7.8"/><rect x="381.90000000000003" y="881" width="15.8" height="7.9"/><path d="M394.0 836 L380.0 854.6 L385.5 855.4 L386.2 865 L399.8 846.6 L392.40000000000003 847.6 Z"/></g>
<g fill="#8c8c8c"><path fill-rule="evenodd" d="M517.8 825 a25.8 25.8 0 1 0 0.01 0 Z M517.8 832.4 a18.4 18.4 0 1 1 -0.01 0 Z"/><rect x="505.99999999999994" y="871" width="23.6" height="7.8"/><rect x="509.9" y="881" width="15.8" height="7.9"/><path d="M522.0 836 L507.99999999999994 854.6 L513.5 855.4 L514.1999999999999 865 L527.8 846.6 L520.4 847.6 Z"/></g>
<rect x="622" y="842.4" width="63" height="37.2" rx="18.6" fill="#fff" stroke="#2aad0e" stroke-width="3.7"/><circle cx="668" cy="861" r="11.5" fill="#2aad0e"/>
<path d="M804.25 843.94 A24.7 24.7 0 1 1 770.55 843.94" fill="none" stroke="#d81e06" stroke-width="6" stroke-linecap="round"/><path d="M787.4 833.2 V855.2" stroke="#d81e06" stroke-width="6" stroke-linecap="round"/>
<path d="M915.92 837.60 A3 3 0 0 1 921.18 837.60 L945.37 881.76 A3 3 0 0 1 942.74 886.20 L894.36 886.20 A3 3 0 0 1 891.73 881.76 Z" fill="none" stroke="#ff6a00" stroke-width="4.4" stroke-linejoin="round"/><path d="M918.6 853.8 V867.2" stroke="#ff6a00" stroke-width="4.6" stroke-linecap="round"/><circle cx="918.6" cy="875.9" r="2.8" fill="#ff6a00"/>
<path d="M1041.24 887.88 A27.9 27.9 0 1 0 1034.20 884.60" fill="none" stroke="#1296db" stroke-width="3.2" stroke-linecap="round"/>
<path d="M1046.49 842.30 L1060.05 842.30 L1053.13 859.25 L1061.53 859.25 L1036.47 892.11 L1043.25 868.98 L1036.47 868.98 Z" fill="#fff" stroke="#1296db" stroke-width="3" stroke-linejoin="miter"/>
<rect x="1148.6" y="828" width="64.8" height="59" rx="8" fill="#fff" stroke="#2aad0e" stroke-width="6.2"/><path d="M1159 890 H1203 V892 Q1203 896.6 1198 896.6 H1164 Q1159 896.6 1159 892 Z" fill="#2aad0e"/>
<path d="M1158.90 863.67 L1167.74 863.67 L1174.08 853.80 L1181.45 870.45 L1187.64 858.66 L1191.32 864.85 L1205.33 864.85" fill="none" stroke="#2aad0e" stroke-width="3" stroke-linejoin="miter"/>
<path d="M1185.43 839.06 L1190.59 838.61 L1187.64 843.48 L1193.24 843.77 L1182.48 854.24 L1185.87 846.87 L1181.74 846.87 Z" fill="#2aad0e"/>
<rect x="1274.5" y="827.5" width="75" height="67" fill="#fff" stroke="#db8f2c" stroke-width="5"/>
<ellipse cx="1311.2" cy="880.3" rx="25" ry="7" fill="none" stroke="#db8f2c" stroke-width="2.6"/>
<path d="M1316.60 835.37 L1314.10 856.74 L1327.36 856.45 L1305.84 884.01 L1308.49 865.59 L1291.99 864.85 Z" fill="#db8f2c"/>
</svg>
<div class="ctx" style="left:357px">在线： 153</div>
<div class="ctx" style="left:486px">离线： 22</div>
<div class="ctx" style="left:617px">开灯： 0</div>
<div class="ctx" style="left:748px">强制： 6</div>
<div class="ctx" style="left:879px">告警： 0</div>
<div class="ctx" style="left:1000px">功率： 0.04</div>
<div class="ctx" style="left:1125px">总电流： 0.6</div>
<div class="ctx" style="left:1263px">漏电：  0</div>
<div class="abs" style="left:1378px;top:787px;width:420px;height:161px;background:#ababab;border:1px solid #000;border-right:none;box-sizing:border-box;overflow:hidden;padding:0">
<div class="abs" style="left:0;top:0;width:420px;height:1px;background:#a6a6a6"></div><div class="abs" style="left:0;top:0;width:1px;height:160px;background:#a6a6a6"></div>
<div class="abs" style="left:1px;top:1px;width:420px;height:18px;background:#fff;border-bottom:1px solid #e5e5e5"></div>
<div class="abs" style="left:120px;top:1px;width:1px;height:64px;background:#e0e0e0"></div>
<div class="t12" style="left:7px;top:5px">时间</div><div class="t12" style="left:126px;top:5px">事件</div>
<div class="abs" style="left:1px;top:19px;width:420px;height:23px;background:#0078d7;color:#fff"><div class="t12" style="left:3px;top:6px"><span class="m">2025/3/28 12:15:08</span></div><div class="abs" style="left:119px;top:0;width:1px;height:22px;background:#e0e0e0"></div><div class="t12" style="left:123px;top:6px">系统加载了<span class="m">16</span>个分组</div></div>
<div class="abs" style="left:1px;top:42px;width:420px;height:23px;background:#fff"><div class="t12" style="left:3px;top:6px"><span class="m">2025/3/28 12:15:08</span></div><div class="abs" style="left:119px;top:0;width:1px;height:22px;background:#e0e0e0"></div><div class="t12" style="left:123px;top:6px">系统加载了<span class="m">175</span>个设备，在线<span class="m">153</span>个</div></div>
</div>
<div class="abs" style="left:0;top:957px;width:1798px;height:21px;background:#f0f0f0"></div>
<div class="t12" style="left:4px;top:962px">设备时钟:</div>
<div class="abs" style="left:810px;top:960px;width:66px;height:15px;background:#ffe4c4"></div><div class="t12" style="left:811px;top:961px">执行指令:</div>
<svg class="abs" style="left:1784px;top:964px" width="14" height="14"><g fill="#a0a0a0"><rect x="10" y="10" width="2" height="2"/><rect x="10" y="6" width="2" height="2"/><rect x="10" y="2" width="2" height="2"/><rect x="6" y="10" width="2" height="2"/><rect x="6" y="6" width="2" height="2"/><rect x="2" y="10" width="2" height="2"/></g></svg>
</body>
</html>
